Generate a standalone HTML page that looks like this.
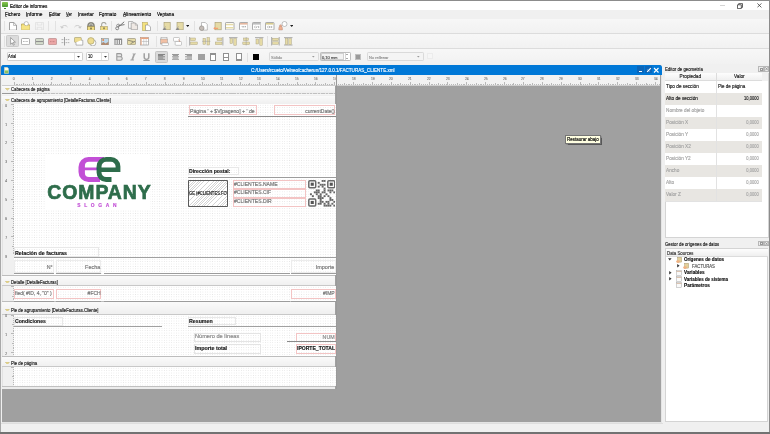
<!DOCTYPE html><html><head><meta charset="utf-8"><style>
html,body{margin:0;padding:0;}
body{width:770px;height:434px;position:relative;overflow:hidden;background:#f0f0f0;font-family:"Liberation Sans",sans-serif;}
div{box-sizing:border-box;}
.t{position:absolute;white-space:nowrap;line-height:1.2;}
</style></head><body>
<div style="position:absolute;left:0px;top:0px;width:770px;height:434px;background:#f0f0f0;"></div>
<div style="position:absolute;left:0px;top:0px;width:770px;height:10px;background:#fff;"></div>
<div style="position:absolute;left:0px;top:0px;width:770px;height:1px;background:#8c8c8c;"></div>
<div style="position:absolute;left:0px;top:0px;width:1.3px;height:434px;background:#a8a8a8;"></div>
<div style="position:absolute;left:769px;top:0px;width:1px;height:434px;background:#8c8c8c;"></div>
<div style="position:absolute;left:0px;top:432.2px;width:770px;height:1.8px;background:#727272;"></div>
<div style="position:absolute;left:2.2px;top:2.2px;width:5.5px;height:5.3px;background:linear-gradient(#8cc850,#4a9a30);border-radius:0.8px;"></div>
<div style="position:absolute;left:3.5px;top:7.5px;width:2px;height:0.8px;background:#4a8a30;"></div>
<div class="t" style="left:10.2px;top:3px;font-size:12.0px;color:#000;font-weight:normal;transform:scale(0.3841,0.4250) translateZ(0);transform-origin:0 0;-webkit-text-stroke:0.38px #000;">Editor de informes</div>
<div style="position:absolute;left:720px;top:4.8px;width:4.6px;height:0.8px;background:#d4d4d4;"></div>
<svg style="position:absolute;left:737px;top:3px" width="6" height="6"><path d="M0.5 1.8h3.8v3.8h-3.8z M1.7 1.8v-1.2h3.8v3.8h-1.2" fill="none" stroke="#222" stroke-width="0.7"/></svg>
<svg style="position:absolute;left:756.8px;top:3px" width="5" height="5"><path d="M0.4 0.4L4.4 4.4M4.4 0.4L0.4 4.4" stroke="#333" stroke-width="0.75"/></svg>
<div style="position:absolute;left:1px;top:10px;width:768px;height:8.5px;background:#f0f0f0;"></div>
<div class="t" style="left:4.9px;top:11px;font-size:12.0px;color:#000;font-weight:normal;transform:scale(0.3824,0.4250) translateZ(0);transform-origin:0 0;-webkit-text-stroke:0.38px #000;">Fichero</div>
<div style="position:absolute;left:5.1000000000000005px;top:16.0px;width:2.4px;height:0.5px;background:#888;"></div>
<div class="t" style="left:26.2px;top:11px;font-size:12.0px;color:#000;font-weight:normal;transform:scale(0.4056,0.4250) translateZ(0);transform-origin:0 0;-webkit-text-stroke:0.38px #000;">Informe</div>
<div style="position:absolute;left:26.4px;top:16.0px;width:1.2px;height:0.5px;background:#888;"></div>
<div class="t" style="left:48.800000000000004px;top:11px;font-size:12.0px;color:#000;font-weight:normal;transform:scale(0.3700,0.4250) translateZ(0);transform-origin:0 0;-webkit-text-stroke:0.38px #000;">Editar</div>
<div style="position:absolute;left:49.0px;top:16.0px;width:2.4px;height:0.5px;background:#888;"></div>
<div class="t" style="left:66.2px;top:11px;font-size:12.0px;color:#000;font-weight:normal;transform:scale(0.3276,0.4250) translateZ(0);transform-origin:0 0;-webkit-text-stroke:0.38px #000;">Ver</div>
<div style="position:absolute;left:66.4px;top:16.0px;width:2.8px;height:0.5px;background:#888;"></div>
<div class="t" style="left:78.0px;top:11px;font-size:12.0px;color:#000;font-weight:normal;transform:scale(0.3859,0.4250) translateZ(0);transform-origin:0 0;-webkit-text-stroke:0.38px #000;">Insertar</div>
<div style="position:absolute;left:78.2px;top:16.0px;width:1.2px;height:0.5px;background:#888;"></div>
<div class="t" style="left:99.2px;top:11px;font-size:12.0px;color:#000;font-weight:normal;transform:scale(0.3872,0.4250) translateZ(0);transform-origin:0 0;-webkit-text-stroke:0.38px #000;">Formato</div>
<div style="position:absolute;left:102.0px;top:16.0px;width:2.4px;height:0.5px;background:#888;"></div>
<div class="t" style="left:122.9px;top:11px;font-size:12.0px;color:#000;font-weight:normal;transform:scale(0.4065,0.4250) translateZ(0);transform-origin:0 0;-webkit-text-stroke:0.38px #000;">Alineamiento</div>
<div style="position:absolute;left:123.10000000000001px;top:16.0px;width:2.8px;height:0.5px;background:#888;"></div>
<div class="t" style="left:156.7px;top:11px;font-size:12.0px;color:#000;font-weight:normal;transform:scale(0.3860,0.4250) translateZ(0);transform-origin:0 0;-webkit-text-stroke:0.38px #000;">Ventana</div>
<div style="position:absolute;left:162.0px;top:16.0px;width:2.4px;height:0.5px;background:#888;"></div>
<div style="position:absolute;left:1px;top:18.5px;width:768px;height:15.0px;background:linear-gradient(#f7f7f7,#f1f1f1);"></div>
<div style="position:absolute;left:1px;top:32.7px;width:768px;height:0.8px;background:#dcdcdc;"></div>
<div style="position:absolute;left:1px;top:33.5px;width:768px;height:15.700000000000003px;background:linear-gradient(#f7f7f7,#f1f1f1);"></div>
<div style="position:absolute;left:1px;top:48.400000000000006px;width:768px;height:0.8px;background:#dcdcdc;"></div>
<div style="position:absolute;left:1px;top:49.2px;width:768px;height:15.399999999999991px;background:linear-gradient(#f7f7f7,#f1f1f1);"></div>
<div style="position:absolute;left:1px;top:63.8px;width:768px;height:0.8px;background:#dcdcdc;"></div>
<div style="position:absolute;left:3.6px;top:21px;width:0.8px;height:10px;background:#e2e2e2;"></div>
<svg style="position:absolute;left:9px;top:21.8px;" width="8" height="8.5" viewBox="0 0 8 8.5"><path d="M0.5 0.5h4.3l2.7 2.7v5h-7z" fill="#fff" stroke="#8a8a8a" stroke-width="0.8"/><path d="M4.6 0.5v2.9h2.9" fill="none" stroke="#8a8a8a" stroke-width="0.6"/></svg>
<svg style="position:absolute;left:21.3px;top:21.2px;" width="9" height="9" viewBox="0 0 9 9"><path d="M0.5 3h3l0.8 0.8h4.2v4.8h-8z" fill="#f4e07a" stroke="#b4a050" stroke-width="0.7"/><circle cx="5.3" cy="2.7" r="2.1" fill="#fff" stroke="#999" stroke-width="0.6"/><path d="M0.5 4.8h8v3.8h-8z" fill="#f6e485"/></svg>
<svg style="position:absolute;left:34.5px;top:21.8px;opacity:0.16;" width="9" height="8.5" viewBox="0 0 9 8.5"><path d="M0.5 0.5h8v7.5h-8z M2.2 0.5v2.5h4.6v-2.5 M2.2 8v-2.7h4.6v2.7" fill="none" stroke="#777" stroke-width="0.8"/></svg>
<div style="position:absolute;left:48px;top:21px;width:0.8px;height:10px;background:#e2e2e2;"></div>
<div style="position:absolute;left:54.5px;top:21px;width:0.8px;height:10px;background:#e2e2e2;"></div>
<svg style="position:absolute;left:60px;top:23px;opacity:0.25;" width="9" height="6" viewBox="0 0 9 6"><path d="M1.5 4.5a3.2 2.6 0 0 1 6 -0.5" fill="none" stroke="#555" stroke-width="1"/><path d="M0 3l1.8 2.8 2-1.6z" fill="#555"/></svg>
<svg style="position:absolute;left:73px;top:23px;opacity:0.25;" width="9" height="6" viewBox="0 0 9 6"><path d="M7.5 4.5a3.2 2.6 0 0 0 -6 -0.5" fill="none" stroke="#555" stroke-width="1"/><path d="M9 3l-1.8 2.8-2-1.6z" fill="#555"/></svg>
<svg style="position:absolute;left:86.8px;top:21.8px;" width="8" height="8.5" viewBox="0 0 8 8.5"><path d="M0.5 8V3.8a3.5 3.5 0 0 1 7 0V8z" fill="#8a8a80" stroke="#7a7a70" stroke-width="0.5"/><path d="M2.2 3.6a1.8 1.8 0 0 1 3.6 0" fill="none" stroke="#d8d8d0" stroke-width="0.8"/><rect x="0.6" y="4.6" width="6.8" height="3.6" fill="#f0dc80" stroke="#9a8a50" stroke-width="0.5"/><rect x="3.5" y="5.6" width="1" height="1.8" fill="#333"/></svg>
<svg style="position:absolute;left:100px;top:21.8px;" width="8" height="8.5" viewBox="0 0 8 8.5"><path d="M1.6 4.5V2.6a2.2 2.2 0 0 1 4.4 0" fill="none" stroke="#a8a8a0" stroke-width="1.1"/><rect x="0.6" y="4.4" width="6.8" height="3.8" fill="#f0dc80" stroke="#a09060" stroke-width="0.5"/><rect x="3.5" y="5.4" width="1" height="1.8" fill="#444"/></svg>
<div style="position:absolute;left:111px;top:21px;width:0.8px;height:10px;background:#e2e2e2;"></div>
<svg style="position:absolute;left:114.5px;top:21.2px;" width="10" height="9.5" viewBox="0 0 10 9.5"><path d="M3.2 6.2L9.2 0.8M3.8 4.6L9.5 3.6" stroke="#6a6a6a" stroke-width="0.9"/><path d="M5.5 4.8L3.5 2.5" stroke="#888" stroke-width="0.6"/><circle cx="2.2" cy="7.3" r="1.5" fill="none" stroke="#707070" stroke-width="0.8"/><circle cx="2.8" cy="4.6" r="1.2" fill="none" stroke="#777" stroke-width="0.7"/></svg>
<svg style="position:absolute;left:128.3px;top:21.3px;" width="10" height="9.2" viewBox="0 0 10 9.2"><path d="M0.5 0.5h4.2l1.8 1.8v5h-6z" fill="#f6f6f6" stroke="#9a9a9a" stroke-width="0.7"/><path d="M3.2 2h4.3l2 2v4.7h-6.3z" fill="#efe9e4" stroke="#9a9a9a" stroke-width="0.7"/><path d="M7.3 2v2.2h2.2" fill="none" stroke="#9a9a9a" stroke-width="0.5"/></svg>
<svg style="position:absolute;left:141.7px;top:21.5px;" width="9" height="9" viewBox="0 0 9 9"><rect x="0.5" y="0.5" width="5" height="8" fill="#f4e27e" stroke="#b8a860" stroke-width="0.6"/><path d="M3.5 3h3l2 2v3.5h-5z" fill="#fff" stroke="#888" stroke-width="0.6"/></svg>
<div style="position:absolute;left:157px;top:21px;width:0.8px;height:10px;background:#e2e2e2;"></div>
<svg style="position:absolute;left:161.5px;top:21.6px;" width="9" height="8.6" viewBox="0 0 9 8.6"><rect x="2" y="0.4" width="6.2" height="7.4" fill="#e6dba6" stroke="#a49a70" stroke-width="0.6"/><path d="M0.5 8l2-2.3 2 1.2-1.6 1.6z" fill="#888"/><path d="M1.5 6.5l2.5-2" stroke="#999" stroke-width="0.6"/></svg>
<svg style="position:absolute;left:174.5px;top:21.6px;" width="9" height="8.6" viewBox="0 0 9 8.6"><rect x="2" y="0.4" width="6.2" height="7.4" fill="#e6dba6" stroke="#a49a70" stroke-width="0.6"/><path d="M0.5 8l2-2.3 2 1.2-1.6 1.6z" fill="#888"/><path d="M1.5 6.5l2.5-2" stroke="#999" stroke-width="0.6"/></svg>
<svg style="position:absolute;left:185.8px;top:25.2px;" width="3.6" height="2.2" viewBox="0 0 3.6 2.2"><path d="M0 0h3.4L1.7 2z" fill="#222"/></svg>
<div style="position:absolute;left:194px;top:21px;width:0.8px;height:10px;background:#e2e2e2;"></div>
<svg style="position:absolute;left:198.6px;top:21.6px;" width="9" height="9" viewBox="0 0 9 9"><path d="M2.5 0.5h3.8l2 2v5.6h-5.8z" fill="#fff" stroke="#999" stroke-width="0.6"/><circle cx="2.7" cy="6.2" r="2.3" fill="#c4bcb6" stroke="#8a8580" stroke-width="0.6"/></svg>
<svg style="position:absolute;left:212.5px;top:21.6px;" width="9" height="9" viewBox="0 0 9 9"><rect x="2" y="0.4" width="6.2" height="7.4" fill="#e6dba6" stroke="#a49a70" stroke-width="0.6"/><path d="M0.3 6.3l1.8-1.6v1h3v1.3h-3v1z" fill="#f4a070"/></svg>
<svg style="position:absolute;left:225.3px;top:21.8px;" width="9.5" height="8.5" viewBox="0 0 9.5 8.5"><rect x="0.5" y="0.5" width="8.5" height="7.5" rx="0.8" fill="#fff" stroke="#8a8a8a" stroke-width="0.7"/><rect x="1" y="1.8" width="7.5" height="1.5" fill="#e6dba6"/><rect x="1" y="5" width="7.5" height="1.5" fill="#e6dba6"/></svg>
<svg style="position:absolute;left:238.6px;top:21.8px;" width="9.5" height="8.5" viewBox="0 0 9.5 8.5"><rect x="0.5" y="0.5" width="8.5" height="7.5" rx="0.8" fill="#fff" stroke="#8a8a8a" stroke-width="0.7"/><rect x="1" y="1" width="7.5" height="1.6" fill="#e6b8a0"/><path d="M2.5 4.8l1 -0.8v1.6zM7 4.8l-1 -0.8v1.6z" fill="#777"/><rect x="4.2" y="4.3" width="1.2" height="1" fill="#888"/></svg>
<svg style="position:absolute;left:251.6px;top:21.8px;" width="9.5" height="8.5" viewBox="0 0 9.5 8.5"><rect x="0.5" y="0.5" width="8.5" height="7.5" rx="0.8" fill="#fff" stroke="#8a8a8a" stroke-width="0.7"/><rect x="1" y="1" width="7.5" height="1.6" fill="#bdbdbd"/><path d="M2.3 5l1.2-0.9M2.3 5l1.2 0.9M7.2 5L6 4.1M7.2 5L6 5.9M4.2 6l1-2" stroke="#777" stroke-width="0.5"/></svg>
<svg style="position:absolute;left:265px;top:21.8px;" width="9.5" height="8.5" viewBox="0 0 9.5 8.5"><rect x="0.5" y="0.5" width="8.5" height="7.5" rx="0.8" fill="#fff" stroke="#8a8a8a" stroke-width="0.7"/><rect x="1" y="1" width="7.5" height="1.6" fill="#d8cc90"/><path d="M2.3 5l1.2-0.9M2.3 5l1.2 0.9M7.2 5L6 4.1M7.2 5L6 5.9" stroke="#777" stroke-width="0.5"/><circle cx="4.75" cy="5" r="0.7" fill="#777"/></svg>
<svg style="position:absolute;left:278px;top:21.2px;" width="9.5" height="9.5" viewBox="0 0 9.5 9.5"><circle cx="6.5" cy="3" r="2.5" fill="#fff" stroke="#999" stroke-width="0.6"/><circle cx="2.6" cy="4.8" r="1.1" fill="#f0b090" stroke="#b08070" stroke-width="0.4"/><path d="M0.8 9v-2a1.8 1.8 0 0 1 3.6 0v2z" fill="#f0b090" stroke="#b08070" stroke-width="0.4"/></svg>
<svg style="position:absolute;left:289.8px;top:25.2px;" width="3.6" height="2.2" viewBox="0 0 3.6 2.2"><path d="M0 0h3.4L1.7 2z" fill="#222"/></svg>
<div style="position:absolute;left:3.6px;top:36px;width:0.8px;height:11px;background:#e2e2e2;"></div>
<div style="position:absolute;left:6.2px;top:35.2px;width:12.7px;height:12px;background:#dcdcdc;border:0.7px solid #cbcbcb;border-radius:1.3px;"></div>
<svg style="position:absolute;left:9.6px;top:36.8px;" width="6" height="9" viewBox="0 0 6 9"><path d="M0.6 0.6L5.4 5.2H3.2L4.3 7.8 3.3 8.2 2.2 5.8 0.6 7.3z" fill="#fff" stroke="#777" stroke-width="0.6"/></svg>
<svg style="position:absolute;left:21.3px;top:37.8px;" width="9" height="7.2" viewBox="0 0 9 7.2"><rect x="0.5" y="0.5" width="8" height="6.2" rx="1" fill="#fff" stroke="#8a8a8a" stroke-width="0.7"/><path d="M2 3.5h5" stroke="#999" stroke-width="0.7" stroke-dasharray="1 0.4"/></svg>
<svg style="position:absolute;left:34.8px;top:37.8px;" width="9" height="7.2" viewBox="0 0 9 7.2"><rect x="0.5" y="0.5" width="8" height="6.2" rx="0.8" fill="#d4dccc" stroke="#8a8a8a" stroke-width="0.7"/><rect x="1" y="3" width="7" height="1.1" fill="#909090"/></svg>
<svg style="position:absolute;left:47.8px;top:37.8px;" width="9" height="7.2" viewBox="0 0 9 7.2"><rect x="0.5" y="0.5" width="8" height="6.2" rx="0.8" fill="#eba6a6" stroke="#b08080" stroke-width="0.6"/><path d="M2 3.6h5" stroke="#b07070" stroke-width="0.6" stroke-dasharray="1 0.5"/></svg>
<svg style="position:absolute;left:61px;top:37.2px;" width="9" height="8.5" viewBox="0 0 9 8.5"><path d="M3.5 0v8.5" stroke="#8a8a8a" stroke-width="0.8"/><path d="M0.5 2.6h8M0.5 5.6h8" stroke="#999" stroke-width="0.7" stroke-dasharray="1.5 0.6"/></svg>
<svg style="position:absolute;left:74px;top:37px;" width="9.5" height="9" viewBox="0 0 9.5 9"><rect x="0.5" y="0.5" width="6.8" height="4.8" rx="0.6" fill="#eedc90" stroke="#a09868" stroke-width="0.6"/><path d="M2 5.3v2.8h6.8v-4.8h-1.5" fill="#fff" stroke="#888" stroke-width="0.6"/></svg>
<svg style="position:absolute;left:87.2px;top:36.8px;" width="9.5" height="9.5" viewBox="0 0 9.5 9.5"><circle cx="5.8" cy="5.8" r="3.1" fill="#fff" stroke="#888" stroke-width="0.6"/><circle cx="3.9" cy="3.9" r="3.3" fill="#eedc90" stroke="#a09868" stroke-width="0.6"/></svg>
<svg style="position:absolute;left:100.5px;top:37.6px;" width="8" height="7.5" viewBox="0 0 8 7.5"><rect x="0.4" y="0.4" width="7.2" height="6.5" fill="#bcd8ec" stroke="#8a8070" stroke-width="0.5"/><circle cx="2.2" cy="2" r="0.9" fill="#f08040"/><path d="M0.5 7V5.3l2-1.2 2 1.5 3-1.8V7z" fill="#b08a70"/></svg>
<svg style="position:absolute;left:114px;top:37.6px;" width="8.5" height="7.5" viewBox="0 0 8.5 7.5"><rect x="0.5" y="0.5" width="7.5" height="1.5" fill="#8a8a8a"/><path d="M1 1v6M3.2 1v5.5M5.4 1v5.5M7.6 1v6" stroke="#8a8a8a" stroke-width="1.1"/><rect x="1" y="6" width="6.5" height="1" fill="#aaa"/></svg>
<svg style="position:absolute;left:127.2px;top:37.8px;" width="9" height="7.2" viewBox="0 0 9 7.2"><rect x="0.5" y="0.5" width="8" height="6.2" rx="0.8" fill="#e6dba6" stroke="#8a8570" stroke-width="0.6"/><path d="M1 2.2l5.5 1.5M3.5 5.8l4.5-2.5" stroke="#555" stroke-width="0.6"/></svg>
<svg style="position:absolute;left:140.3px;top:37.2px;" width="9" height="8.5" viewBox="0 0 9 8.5"><rect x="0.5" y="0.5" width="8" height="7.5" fill="#fff" stroke="#8a8a8a" stroke-width="0.6"/><rect x="0.5" y="0.5" width="8" height="1.5" fill="#eba37e"/><rect x="0.5" y="0.5" width="1.2" height="7.5" fill="#e8b090"/><path d="M3.8 2v6M6.2 2v6M1.7 4.5h6.8" stroke="#a0a0a0" stroke-width="0.45"/></svg>
<div style="position:absolute;left:156px;top:36px;width:0.8px;height:11px;background:#e2e2e2;"></div>
<svg style="position:absolute;left:159.8px;top:37px;" width="9" height="9" viewBox="0 0 9 9"><rect x="1" y="0.5" width="6" height="2.5" fill="#fff" stroke="#999" stroke-width="0.5"/><rect x="0.5" y="2" width="7" height="5" fill="#f2c0a4" stroke="#999" stroke-width="0.5"/><rect x="2" y="6" width="6.5" height="2.5" fill="#fff" stroke="#999" stroke-width="0.5"/></svg>
<svg style="position:absolute;left:173.2px;top:37px;" width="9" height="9" viewBox="0 0 9 9"><rect x="0.5" y="0.5" width="6" height="3.8" rx="0.8" fill="#fff" stroke="#999" stroke-width="0.5"/><rect x="2.2" y="4.5" width="6.3" height="3.8" rx="0.8" fill="#fff" stroke="#999" stroke-width="0.5"/><path d="M5.5 2.5l1.5 2.5" stroke="#d08060" stroke-width="0.6"/></svg>
<div style="position:absolute;left:185.5px;top:36px;width:0.8px;height:11px;background:#e2e2e2;"></div>
<svg style="position:absolute;left:189.2px;top:37.2px;" width="8.8" height="8.6" viewBox="0 0 8.8 8.6"><path d="M0.6 0v8.5" stroke="#999" stroke-width="0.8"/><rect x="1.5" y="1" width="5" height="2.6" fill="#e6dba6" stroke="#a8a080" stroke-width="0.45"/><rect x="1.5" y="5" width="6.8" height="2.6" fill="#e6dba6" stroke="#a8a080" stroke-width="0.45"/></svg>
<svg style="position:absolute;left:202.2px;top:37.2px;" width="8.8" height="8.6" viewBox="0 0 8.8 8.6"><rect x="1" y="1.3" width="2.6" height="6" fill="#e6dba6" stroke="#a8a080" stroke-width="0.45"/><rect x="5" y="0.6" width="2.6" height="7.4" fill="#e6dba6" stroke="#a8a080" stroke-width="0.45"/><path d="M0 4.3h8.5" stroke="#999" stroke-width="0.5"/></svg>
<svg style="position:absolute;left:215.4px;top:37.2px;" width="8.8" height="8.6" viewBox="0 0 8.8 8.6"><path d="M7.9 0v8.5" stroke="#999" stroke-width="0.8"/><rect x="2" y="1" width="5" height="2.6" fill="#e6dba6" stroke="#a8a080" stroke-width="0.45"/><rect x="0.3" y="5" width="6.7" height="2.6" fill="#e6dba6" stroke="#a8a080" stroke-width="0.45"/></svg>
<svg style="position:absolute;left:228.8px;top:37.2px;" width="8.8" height="8.6" viewBox="0 0 8.8 8.6"><path d="M0 0.6h8.5" stroke="#999" stroke-width="0.8"/><rect x="1" y="1.5" width="2.6" height="5" fill="#e6dba6" stroke="#a8a080" stroke-width="0.45"/><rect x="4.8" y="1.5" width="2.6" height="6.8" fill="#e6dba6" stroke="#a8a080" stroke-width="0.45"/></svg>
<svg style="position:absolute;left:242px;top:37.2px;" width="8.8" height="8.6" viewBox="0 0 8.8 8.6"><rect x="1.5" y="1" width="5" height="2.6" fill="#e6dba6" stroke="#a8a080" stroke-width="0.45"/><rect x="0.8" y="5" width="6.8" height="2.6" fill="#e6dba6" stroke="#a8a080" stroke-width="0.45"/><path d="M4.2 0v8.5" stroke="#999" stroke-width="0.5"/></svg>
<svg style="position:absolute;left:255.2px;top:37.2px;" width="8.8" height="8.6" viewBox="0 0 8.8 8.6"><path d="M0 0.6h8.5" stroke="#999" stroke-width="0.8"/><rect x="1" y="2" width="2.6" height="5" fill="#e6dba6" stroke="#a8a080" stroke-width="0.45"/><rect x="4.8" y="1.5" width="2.6" height="6.8" fill="#e6dba6" stroke="#a8a080" stroke-width="0.45"/></svg>
<div style="position:absolute;left:267.3px;top:36px;width:0.8px;height:11px;background:#e2e2e2;"></div>
<svg style="position:absolute;left:271px;top:37.2px;" width="8.8" height="8.6" viewBox="0 0 8.8 8.6"><path d="M0.6 0v8.5M8.2 0v8.5" stroke="#999" stroke-width="0.8"/><rect x="1.5" y="1.2" width="6" height="2.5" fill="#e6dba6" stroke="#a8a080" stroke-width="0.45"/><rect x="1.5" y="4.8" width="6" height="2.5" fill="#e6dba6" stroke="#a8a080" stroke-width="0.45"/></svg>
<svg style="position:absolute;left:284px;top:37.2px;" width="8.8" height="8.6" viewBox="0 0 8.8 8.6"><path d="M0 0.6h8.5M0 8h8.5" stroke="#999" stroke-width="0.8"/><rect x="1.2" y="1.5" width="2.6" height="6" fill="#e6dba6" stroke="#a8a080" stroke-width="0.45"/><rect x="4.8" y="1.5" width="2.6" height="6" fill="#e6dba6" stroke="#a8a080" stroke-width="0.45"/></svg>
<div style="position:absolute;left:6.5px;top:52.3px;width:76px;height:9px;background:#fff;border:0.8px solid #cfcfcf;border-radius:1.2px;"></div>
<div class="t" style="left:7.8px;top:55px;font-size:12.0px;color:#111;font-weight:normal;transform:scale(0.3333,0.3333) translateZ(0);transform-origin:0 0;-webkit-text-stroke:0.38px #111;"></div>
<div style="position:absolute;left:74.3px;top:53.099999999999994px;width:0.7px;height:7.4px;background:#e2e2e2;"></div>
<svg style="position:absolute;left:76.9px;top:55.9px;" width="3" height="2" viewBox="0 0 3 2"><path d="M0 0h3L1.5 1.8z" fill="#333"/></svg>
<div class="t" style="left:7.9px;top:54px;font-size:12.0px;color:#111;font-weight:normal;transform:scale(0.3332,0.4000) translateZ(0);transform-origin:0 0;-webkit-text-stroke:0.38px #111;">Arial</div>
<div style="position:absolute;left:86px;top:52.3px;width:23.4px;height:9px;background:#fff;border:0.8px solid #cfcfcf;border-radius:1.2px;"></div>
<div class="t" style="left:87.3px;top:55px;font-size:12.0px;color:#111;font-weight:normal;transform:scale(0.3333,0.3333) translateZ(0);transform-origin:0 0;-webkit-text-stroke:0.38px #111;"></div>
<div style="position:absolute;left:101.2px;top:53.099999999999994px;width:0.7px;height:7.4px;background:#e2e2e2;"></div>
<svg style="position:absolute;left:103.80000000000001px;top:55.9px;" width="3" height="2" viewBox="0 0 3 2"><path d="M0 0h3L1.5 1.8z" fill="#333"/></svg>
<div class="t" style="left:87.5px;top:54px;font-size:12.0px;color:#111;font-weight:normal;transform:scale(0.3446,0.4000) translateZ(0);transform-origin:0 0;-webkit-text-stroke:0.38px #111;">10</div>
<svg style="position:absolute;left:115.5px;top:53.2px;" width="8" height="7.8" viewBox="0 0 8 7.8"><path d="M0.8 0.6h3.3a1.65 1.6 0 0 1 0 3.2h-3.3z M0.8 3.8h3.7a1.75 1.7 0 0 1 0 3.4h-3.7z" fill="#e6e6e6" stroke="#9a9a9a" stroke-width="1.1" stroke-linejoin="round"/></svg>
<svg style="position:absolute;left:129.5px;top:53.2px;" width="6.5" height="7.8" viewBox="0 0 6.5 7.8"><path d="M2.6 0.4h3.6l-0.2 0.9h-0.9l-1.9 5.2h0.9l-0.2 0.9h-3.6l0.2-0.9h0.9l1.9-5.2h-0.9z" fill="#a4a4a4"/></svg>
<svg style="position:absolute;left:142.5px;top:53px;" width="7" height="8.2" viewBox="0 0 7 8.2"><path d="M1.2 0.3v3.8a2.3 2.3 0 0 0 4.6 0v-3.8" fill="none" stroke="#a0a0a0" stroke-width="1.5"/><rect x="0.3" y="7" width="6.4" height="1" fill="#a0a0a0"/></svg>
<div style="position:absolute;left:155px;top:51.2px;width:13px;height:11.5px;background:#dadada;border:0.8px solid #c4c4c4;border-radius:1.5px;"></div>
<svg style="position:absolute;left:158.3px;top:54.0px;" width="7" height="6" viewBox="0 0 7 6"><rect x="0" y="0.00" width="7" height="0.85" fill="#777"/><rect x="0" y="1.20" width="5.2" height="0.85" fill="#777"/><rect x="0" y="2.40" width="7" height="0.85" fill="#777"/><rect x="0" y="3.60" width="5.2" height="0.85" fill="#777"/><rect x="0" y="4.80" width="7" height="0.85" fill="#777"/></svg>
<svg style="position:absolute;left:171.5px;top:54.0px;" width="7" height="6" viewBox="0 0 7 6"><rect x="0.0" y="0.00" width="7" height="0.85" fill="#888"/><rect x="0.8999999999999999" y="1.20" width="5.2" height="0.85" fill="#888"/><rect x="0.0" y="2.40" width="7" height="0.85" fill="#888"/><rect x="0.8999999999999999" y="3.60" width="5.2" height="0.85" fill="#888"/><rect x="0.0" y="4.80" width="7" height="0.85" fill="#888"/></svg>
<svg style="position:absolute;left:184.5px;top:54.0px;" width="7" height="6" viewBox="0 0 7 6"><rect x="0" y="0.00" width="7" height="0.85" fill="#888"/><rect x="1.7999999999999998" y="1.20" width="5.2" height="0.85" fill="#888"/><rect x="0" y="2.40" width="7" height="0.85" fill="#888"/><rect x="1.7999999999999998" y="3.60" width="5.2" height="0.85" fill="#888"/><rect x="0" y="4.80" width="7" height="0.85" fill="#888"/></svg>
<div style="position:absolute;left:197.5px;top:54px;width:7px;height:5.5px;background:#a0a0a0;"></div>
<div style="position:absolute;left:210px;top:53.3px;width:6.2px;height:8px;background:#fff;border:0.8px solid #909090;"></div>
<div style="position:absolute;left:223px;top:53.3px;width:6.2px;height:8px;background:#fff;border:0.8px solid #909090;"></div>
<div style="position:absolute;left:236px;top:53.3px;width:6.2px;height:8px;background:#fff;border:0.8px solid #909090;"></div>
<div style="position:absolute;left:211px;top:54.2px;width:4.2px;height:1px;background:#909090;"></div>
<div style="position:absolute;left:224px;top:56.8px;width:4.2px;height:1px;background:#909090;"></div>
<div style="position:absolute;left:237px;top:59.4px;width:4.2px;height:1px;background:#909090;"></div>
<div style="position:absolute;left:247px;top:52.5px;width:0.7px;height:9px;background:#e0e0e0;"></div>
<div style="position:absolute;left:253px;top:54px;width:5.8px;height:5.8px;background:#000;"></div>
<div style="position:absolute;left:269px;top:52.3px;width:49.5px;height:9px;background:#f4f4f4;border:0.8px solid #dadada;border-radius:1.2px;"></div>
<div class="t" style="left:270.8px;top:55px;font-size:12.0px;color:#8a8a8a;font-weight:normal;transform:scale(0.3333,0.3333) translateZ(0);transform-origin:0 0;-webkit-text-stroke:0.38px #8a8a8a;">Sólido</div>
<svg style="position:absolute;left:312.3px;top:56.099999999999994px;" width="2.6" height="1.8" viewBox="0 0 2.6 1.8"><path d="M0 0h2.6L1.3 1.6z" fill="#999"/></svg>
<div style="position:absolute;left:320px;top:52.3px;width:30.5px;height:9px;background:#fff;border:0.8px solid #bdbdbd;border-radius:1.2px;"></div>
<div style="position:absolute;left:320.8px;top:53.2px;width:23.5px;height:7.3px;background:#f2f2f2;border:0.6px solid #d0d0d0;"></div>
<div class="t" style="left:322.3px;top:55px;font-size:12.0px;color:#444;font-weight:normal;transform:scale(0.3333,0.3333) translateZ(0);transform-origin:0 0;-webkit-text-stroke:0.38px #444;">0,10 mm</div>
<div style="position:absolute;left:344.8px;top:53.2px;width:0.6px;height:7.3px;background:#d6d6d6;"></div>
<div style="position:absolute;left:346.3px;top:54.3px;width:0;height:0;border-left:1.2px solid transparent;border-right:1.2px solid transparent;border-bottom:1.5px solid #555;"></div>
<div style="position:absolute;left:346.3px;top:58.3px;width:0;height:0;border-left:1.2px solid transparent;border-right:1.2px solid transparent;border-top:1.5px solid #555;"></div>
<div style="position:absolute;left:355px;top:54px;width:6px;height:6px;background:#9a9a9a;border:0.7px solid #c0c0c0;"></div>
<div style="position:absolute;left:367px;top:52.3px;width:56.5px;height:9px;background:#f4f4f4;border:0.8px solid #dadada;border-radius:1.2px;"></div>
<div class="t" style="left:368.8px;top:55px;font-size:12.0px;color:#8a8a8a;font-weight:normal;transform:scale(0.3333,0.3333) translateZ(0);transform-origin:0 0;-webkit-text-stroke:0.38px #8a8a8a;">No rellenar</div>
<svg style="position:absolute;left:417.3px;top:56.099999999999994px;" width="2.6" height="1.8" viewBox="0 0 2.6 1.8"><path d="M0 0h2.6L1.3 1.6z" fill="#999"/></svg>
<div style="position:absolute;left:426.5px;top:53px;width:6.4px;height:6.4px;background:#f6f6f6;border:0.5px solid #ececec;"></div>
<div style="position:absolute;left:1px;top:64px;width:662px;height:359px;background:#f0f0f0;"></div>
<div style="position:absolute;left:1.9px;top:64.6px;width:760px;height:358px;background:#a0a0a0;"></div>
<div style="position:absolute;left:660.5px;top:64.6px;width:1.5px;height:358px;background:#e4e4e4;"></div>
<div style="position:absolute;left:1.9px;top:421.6px;width:660px;height:1.4px;background:#e4e4e4;"></div>
<div style="position:absolute;left:1.4px;top:64.8px;width:660.6px;height:10.2px;background:#0078d7;border-radius:2.5px 2.5px 0 0;"></div>
<svg style="position:absolute;left:4.3px;top:66.6px" width="5" height="7"><path d="M0.3 0.3h3l1.3 1.3v4.8h-4.3z" fill="#fffbe0" stroke="#c8c8b0" stroke-width="0.4"/><rect x="0.7" y="3.4" width="3.6" height="2.8" fill="#8cc060"/></svg>
<div class="t" style="left:251.2px;top:68px;font-size:12.0px;color:#fff;font-weight:normal;transform:scale(0.3817,0.3817) translateZ(0);transform-origin:0 0;-webkit-text-stroke:0.38px #fff;">C:/Users/rcueto/Velneo/cacherun/127.0.0.1/FACTURAS_CLIENTE.xml</div>
<div style="position:absolute;left:636.8px;top:66.3px;width:7.2px;height:7.2px;background:#0b65b8;"></div>
<div style="position:absolute;left:638.8px;top:71.3px;width:3.5px;height:1px;background:#fff;"></div>
<div style="position:absolute;left:644.6px;top:66.3px;width:7.6px;height:7.2px;background:#0b65b8;"></div>
<svg style="position:absolute;left:645.5px;top:67px" width="6" height="6"><path d="M1.2 4.8L4.8 1.2" stroke="#fff" stroke-width="1.2"/><path d="M1.5 2.6l1.9 1.9" stroke="#fff" stroke-width="0.6"/></svg>
<svg style="position:absolute;left:653.2px;top:66.8px" width="6.5" height="6.5"><path d="M1 1L5.5 5.5M5.5 1L1 5.5" stroke="#fff" stroke-width="1.1"/></svg>
<div style="position:absolute;left:1.9px;top:75px;width:658.6px;height:10.7px;background:#f2f2f2;"></div>
<div style="position:absolute;left:1.9px;top:85.2px;width:658.6px;height:0.8px;background:#cdcdcd;"></div>
<div class="t" style="left:-41.733px;width:400.0px;text-align:center;top:77px;font-size:12.0px;color:#7a7a7a;font-weight:normal;transform:scale(0.2787,0.3167) translateZ(0);transform-origin:0 0;-webkit-text-stroke:0.38px #7a7a7a;">0</div>
<div style="position:absolute;left:13.70px;top:82.00px;width:0.6px;height:3.2px;background:#b8b8b8;"></div>
<div style="position:absolute;left:15.59px;top:83.70px;width:0.6px;height:1.5px;background:#b8b8b8;"></div>
<div style="position:absolute;left:17.47px;top:83.70px;width:0.6px;height:1.5px;background:#b8b8b8;"></div>
<div style="position:absolute;left:19.36px;top:83.70px;width:0.6px;height:1.5px;background:#b8b8b8;"></div>
<div style="position:absolute;left:21.24px;top:83.70px;width:0.6px;height:1.5px;background:#b8b8b8;"></div>
<div style="position:absolute;left:23.13px;top:83.00px;width:0.6px;height:2.2px;background:#b8b8b8;"></div>
<div style="position:absolute;left:25.02px;top:83.70px;width:0.6px;height:1.5px;background:#b8b8b8;"></div>
<div style="position:absolute;left:26.90px;top:83.70px;width:0.6px;height:1.5px;background:#b8b8b8;"></div>
<div style="position:absolute;left:28.79px;top:83.70px;width:0.6px;height:1.5px;background:#b8b8b8;"></div>
<div style="position:absolute;left:30.67px;top:83.70px;width:0.6px;height:1.5px;background:#b8b8b8;"></div>
<div class="t" style="left:-22.873px;width:400.0px;text-align:center;top:77px;font-size:12.0px;color:#7a7a7a;font-weight:normal;transform:scale(0.2787,0.3167) translateZ(0);transform-origin:0 0;-webkit-text-stroke:0.38px #7a7a7a;">1</div>
<div style="position:absolute;left:32.56px;top:82.00px;width:0.6px;height:3.2px;background:#b8b8b8;"></div>
<div style="position:absolute;left:34.45px;top:83.70px;width:0.6px;height:1.5px;background:#b8b8b8;"></div>
<div style="position:absolute;left:36.33px;top:83.70px;width:0.6px;height:1.5px;background:#b8b8b8;"></div>
<div style="position:absolute;left:38.22px;top:83.70px;width:0.6px;height:1.5px;background:#b8b8b8;"></div>
<div style="position:absolute;left:40.10px;top:83.70px;width:0.6px;height:1.5px;background:#b8b8b8;"></div>
<div style="position:absolute;left:41.99px;top:83.00px;width:0.6px;height:2.2px;background:#b8b8b8;"></div>
<div style="position:absolute;left:43.88px;top:83.70px;width:0.6px;height:1.5px;background:#b8b8b8;"></div>
<div style="position:absolute;left:45.76px;top:83.70px;width:0.6px;height:1.5px;background:#b8b8b8;"></div>
<div style="position:absolute;left:47.65px;top:83.70px;width:0.6px;height:1.5px;background:#b8b8b8;"></div>
<div style="position:absolute;left:49.53px;top:83.70px;width:0.6px;height:1.5px;background:#b8b8b8;"></div>
<div class="t" style="left:-4.013px;width:400.0px;text-align:center;top:77px;font-size:12.0px;color:#7a7a7a;font-weight:normal;transform:scale(0.2787,0.3167) translateZ(0);transform-origin:0 0;-webkit-text-stroke:0.38px #7a7a7a;">2</div>
<div style="position:absolute;left:51.42px;top:82.00px;width:0.6px;height:3.2px;background:#b8b8b8;"></div>
<div style="position:absolute;left:53.31px;top:83.70px;width:0.6px;height:1.5px;background:#b8b8b8;"></div>
<div style="position:absolute;left:55.19px;top:83.70px;width:0.6px;height:1.5px;background:#b8b8b8;"></div>
<div style="position:absolute;left:57.08px;top:83.70px;width:0.6px;height:1.5px;background:#b8b8b8;"></div>
<div style="position:absolute;left:58.96px;top:83.70px;width:0.6px;height:1.5px;background:#b8b8b8;"></div>
<div style="position:absolute;left:60.85px;top:83.00px;width:0.6px;height:2.2px;background:#b8b8b8;"></div>
<div style="position:absolute;left:62.74px;top:83.70px;width:0.6px;height:1.5px;background:#b8b8b8;"></div>
<div style="position:absolute;left:64.62px;top:83.70px;width:0.6px;height:1.5px;background:#b8b8b8;"></div>
<div style="position:absolute;left:66.51px;top:83.70px;width:0.6px;height:1.5px;background:#b8b8b8;"></div>
<div style="position:absolute;left:68.39px;top:83.70px;width:0.6px;height:1.5px;background:#b8b8b8;"></div>
<div class="t" style="left:14.847px;width:400.0px;text-align:center;top:77px;font-size:12.0px;color:#7a7a7a;font-weight:normal;transform:scale(0.2787,0.3167) translateZ(0);transform-origin:0 0;-webkit-text-stroke:0.38px #7a7a7a;">3</div>
<div style="position:absolute;left:70.28px;top:82.00px;width:0.6px;height:3.2px;background:#b8b8b8;"></div>
<div style="position:absolute;left:72.17px;top:83.70px;width:0.6px;height:1.5px;background:#b8b8b8;"></div>
<div style="position:absolute;left:74.05px;top:83.70px;width:0.6px;height:1.5px;background:#b8b8b8;"></div>
<div style="position:absolute;left:75.94px;top:83.70px;width:0.6px;height:1.5px;background:#b8b8b8;"></div>
<div style="position:absolute;left:77.82px;top:83.70px;width:0.6px;height:1.5px;background:#b8b8b8;"></div>
<div style="position:absolute;left:79.71px;top:83.00px;width:0.6px;height:2.2px;background:#b8b8b8;"></div>
<div style="position:absolute;left:81.60px;top:83.70px;width:0.6px;height:1.5px;background:#b8b8b8;"></div>
<div style="position:absolute;left:83.48px;top:83.70px;width:0.6px;height:1.5px;background:#b8b8b8;"></div>
<div style="position:absolute;left:85.37px;top:83.70px;width:0.6px;height:1.5px;background:#b8b8b8;"></div>
<div style="position:absolute;left:87.25px;top:83.70px;width:0.6px;height:1.5px;background:#b8b8b8;"></div>
<div class="t" style="left:33.707px;width:400.0px;text-align:center;top:77px;font-size:12.0px;color:#7a7a7a;font-weight:normal;transform:scale(0.2787,0.3167) translateZ(0);transform-origin:0 0;-webkit-text-stroke:0.38px #7a7a7a;">4</div>
<div style="position:absolute;left:89.14px;top:82.00px;width:0.6px;height:3.2px;background:#b8b8b8;"></div>
<div style="position:absolute;left:91.03px;top:83.70px;width:0.6px;height:1.5px;background:#b8b8b8;"></div>
<div style="position:absolute;left:92.91px;top:83.70px;width:0.6px;height:1.5px;background:#b8b8b8;"></div>
<div style="position:absolute;left:94.80px;top:83.70px;width:0.6px;height:1.5px;background:#b8b8b8;"></div>
<div style="position:absolute;left:96.68px;top:83.70px;width:0.6px;height:1.5px;background:#b8b8b8;"></div>
<div style="position:absolute;left:98.57px;top:83.00px;width:0.6px;height:2.2px;background:#b8b8b8;"></div>
<div style="position:absolute;left:100.46px;top:83.70px;width:0.6px;height:1.5px;background:#b8b8b8;"></div>
<div style="position:absolute;left:102.34px;top:83.70px;width:0.6px;height:1.5px;background:#b8b8b8;"></div>
<div style="position:absolute;left:104.23px;top:83.70px;width:0.6px;height:1.5px;background:#b8b8b8;"></div>
<div style="position:absolute;left:106.11px;top:83.70px;width:0.6px;height:1.5px;background:#b8b8b8;"></div>
<div class="t" style="left:52.567px;width:400.0px;text-align:center;top:77px;font-size:12.0px;color:#7a7a7a;font-weight:normal;transform:scale(0.2787,0.3167) translateZ(0);transform-origin:0 0;-webkit-text-stroke:0.38px #7a7a7a;">5</div>
<div style="position:absolute;left:108.00px;top:82.00px;width:0.6px;height:3.2px;background:#b8b8b8;"></div>
<div style="position:absolute;left:109.89px;top:83.70px;width:0.6px;height:1.5px;background:#b8b8b8;"></div>
<div style="position:absolute;left:111.77px;top:83.70px;width:0.6px;height:1.5px;background:#b8b8b8;"></div>
<div style="position:absolute;left:113.66px;top:83.70px;width:0.6px;height:1.5px;background:#b8b8b8;"></div>
<div style="position:absolute;left:115.54px;top:83.70px;width:0.6px;height:1.5px;background:#b8b8b8;"></div>
<div style="position:absolute;left:117.43px;top:83.00px;width:0.6px;height:2.2px;background:#b8b8b8;"></div>
<div style="position:absolute;left:119.32px;top:83.70px;width:0.6px;height:1.5px;background:#b8b8b8;"></div>
<div style="position:absolute;left:121.20px;top:83.70px;width:0.6px;height:1.5px;background:#b8b8b8;"></div>
<div style="position:absolute;left:123.09px;top:83.70px;width:0.6px;height:1.5px;background:#b8b8b8;"></div>
<div style="position:absolute;left:124.97px;top:83.70px;width:0.6px;height:1.5px;background:#b8b8b8;"></div>
<div class="t" style="left:71.427px;width:400.0px;text-align:center;top:77px;font-size:12.0px;color:#7a7a7a;font-weight:normal;transform:scale(0.2787,0.3167) translateZ(0);transform-origin:0 0;-webkit-text-stroke:0.38px #7a7a7a;">6</div>
<div style="position:absolute;left:126.86px;top:82.00px;width:0.6px;height:3.2px;background:#b8b8b8;"></div>
<div style="position:absolute;left:128.75px;top:83.70px;width:0.6px;height:1.5px;background:#b8b8b8;"></div>
<div style="position:absolute;left:130.63px;top:83.70px;width:0.6px;height:1.5px;background:#b8b8b8;"></div>
<div style="position:absolute;left:132.52px;top:83.70px;width:0.6px;height:1.5px;background:#b8b8b8;"></div>
<div style="position:absolute;left:134.40px;top:83.70px;width:0.6px;height:1.5px;background:#b8b8b8;"></div>
<div style="position:absolute;left:136.29px;top:83.00px;width:0.6px;height:2.2px;background:#b8b8b8;"></div>
<div style="position:absolute;left:138.18px;top:83.70px;width:0.6px;height:1.5px;background:#b8b8b8;"></div>
<div style="position:absolute;left:140.06px;top:83.70px;width:0.6px;height:1.5px;background:#b8b8b8;"></div>
<div style="position:absolute;left:141.95px;top:83.70px;width:0.6px;height:1.5px;background:#b8b8b8;"></div>
<div style="position:absolute;left:143.83px;top:83.70px;width:0.6px;height:1.5px;background:#b8b8b8;"></div>
<div class="t" style="left:90.287px;width:400.0px;text-align:center;top:77px;font-size:12.0px;color:#7a7a7a;font-weight:normal;transform:scale(0.2787,0.3167) translateZ(0);transform-origin:0 0;-webkit-text-stroke:0.38px #7a7a7a;">7</div>
<div style="position:absolute;left:145.72px;top:82.00px;width:0.6px;height:3.2px;background:#b8b8b8;"></div>
<div style="position:absolute;left:147.61px;top:83.70px;width:0.6px;height:1.5px;background:#b8b8b8;"></div>
<div style="position:absolute;left:149.49px;top:83.70px;width:0.6px;height:1.5px;background:#b8b8b8;"></div>
<div style="position:absolute;left:151.38px;top:83.70px;width:0.6px;height:1.5px;background:#b8b8b8;"></div>
<div style="position:absolute;left:153.26px;top:83.70px;width:0.6px;height:1.5px;background:#b8b8b8;"></div>
<div style="position:absolute;left:155.15px;top:83.00px;width:0.6px;height:2.2px;background:#b8b8b8;"></div>
<div style="position:absolute;left:157.04px;top:83.70px;width:0.6px;height:1.5px;background:#b8b8b8;"></div>
<div style="position:absolute;left:158.92px;top:83.70px;width:0.6px;height:1.5px;background:#b8b8b8;"></div>
<div style="position:absolute;left:160.81px;top:83.70px;width:0.6px;height:1.5px;background:#b8b8b8;"></div>
<div style="position:absolute;left:162.69px;top:83.70px;width:0.6px;height:1.5px;background:#b8b8b8;"></div>
<div class="t" style="left:109.147px;width:400.0px;text-align:center;top:77px;font-size:12.0px;color:#7a7a7a;font-weight:normal;transform:scale(0.2787,0.3167) translateZ(0);transform-origin:0 0;-webkit-text-stroke:0.38px #7a7a7a;">8</div>
<div style="position:absolute;left:164.58px;top:82.00px;width:0.6px;height:3.2px;background:#b8b8b8;"></div>
<div style="position:absolute;left:166.47px;top:83.70px;width:0.6px;height:1.5px;background:#b8b8b8;"></div>
<div style="position:absolute;left:168.35px;top:83.70px;width:0.6px;height:1.5px;background:#b8b8b8;"></div>
<div style="position:absolute;left:170.24px;top:83.70px;width:0.6px;height:1.5px;background:#b8b8b8;"></div>
<div style="position:absolute;left:172.12px;top:83.70px;width:0.6px;height:1.5px;background:#b8b8b8;"></div>
<div style="position:absolute;left:174.01px;top:83.00px;width:0.6px;height:2.2px;background:#b8b8b8;"></div>
<div style="position:absolute;left:175.90px;top:83.70px;width:0.6px;height:1.5px;background:#b8b8b8;"></div>
<div style="position:absolute;left:177.78px;top:83.70px;width:0.6px;height:1.5px;background:#b8b8b8;"></div>
<div style="position:absolute;left:179.67px;top:83.70px;width:0.6px;height:1.5px;background:#b8b8b8;"></div>
<div style="position:absolute;left:181.55px;top:83.70px;width:0.6px;height:1.5px;background:#b8b8b8;"></div>
<div class="t" style="left:128.007px;width:400.0px;text-align:center;top:77px;font-size:12.0px;color:#7a7a7a;font-weight:normal;transform:scale(0.2787,0.3167) translateZ(0);transform-origin:0 0;-webkit-text-stroke:0.38px #7a7a7a;">9</div>
<div style="position:absolute;left:183.44px;top:82.00px;width:0.6px;height:3.2px;background:#b8b8b8;"></div>
<div style="position:absolute;left:185.33px;top:83.70px;width:0.6px;height:1.5px;background:#b8b8b8;"></div>
<div style="position:absolute;left:187.21px;top:83.70px;width:0.6px;height:1.5px;background:#b8b8b8;"></div>
<div style="position:absolute;left:189.10px;top:83.70px;width:0.6px;height:1.5px;background:#b8b8b8;"></div>
<div style="position:absolute;left:190.98px;top:83.70px;width:0.6px;height:1.5px;background:#b8b8b8;"></div>
<div style="position:absolute;left:192.87px;top:83.00px;width:0.6px;height:2.2px;background:#b8b8b8;"></div>
<div style="position:absolute;left:194.76px;top:83.70px;width:0.6px;height:1.5px;background:#b8b8b8;"></div>
<div style="position:absolute;left:196.64px;top:83.70px;width:0.6px;height:1.5px;background:#b8b8b8;"></div>
<div style="position:absolute;left:198.53px;top:83.70px;width:0.6px;height:1.5px;background:#b8b8b8;"></div>
<div style="position:absolute;left:200.41px;top:83.70px;width:0.6px;height:1.5px;background:#b8b8b8;"></div>
<div class="t" style="left:146.867px;width:400.0px;text-align:center;top:77px;font-size:12.0px;color:#7a7a7a;font-weight:normal;transform:scale(0.2787,0.3167) translateZ(0);transform-origin:0 0;-webkit-text-stroke:0.38px #7a7a7a;">10</div>
<div style="position:absolute;left:202.30px;top:82.00px;width:0.6px;height:3.2px;background:#b8b8b8;"></div>
<div style="position:absolute;left:204.19px;top:83.70px;width:0.6px;height:1.5px;background:#b8b8b8;"></div>
<div style="position:absolute;left:206.07px;top:83.70px;width:0.6px;height:1.5px;background:#b8b8b8;"></div>
<div style="position:absolute;left:207.96px;top:83.70px;width:0.6px;height:1.5px;background:#b8b8b8;"></div>
<div style="position:absolute;left:209.84px;top:83.70px;width:0.6px;height:1.5px;background:#b8b8b8;"></div>
<div style="position:absolute;left:211.73px;top:83.00px;width:0.6px;height:2.2px;background:#b8b8b8;"></div>
<div style="position:absolute;left:213.62px;top:83.70px;width:0.6px;height:1.5px;background:#b8b8b8;"></div>
<div style="position:absolute;left:215.50px;top:83.70px;width:0.6px;height:1.5px;background:#b8b8b8;"></div>
<div style="position:absolute;left:217.39px;top:83.70px;width:0.6px;height:1.5px;background:#b8b8b8;"></div>
<div style="position:absolute;left:219.27px;top:83.70px;width:0.6px;height:1.5px;background:#b8b8b8;"></div>
<div class="t" style="left:165.727px;width:400.0px;text-align:center;top:77px;font-size:12.0px;color:#7a7a7a;font-weight:normal;transform:scale(0.2787,0.3167) translateZ(0);transform-origin:0 0;-webkit-text-stroke:0.38px #7a7a7a;">11</div>
<div style="position:absolute;left:221.16px;top:82.00px;width:0.6px;height:3.2px;background:#b8b8b8;"></div>
<div style="position:absolute;left:223.05px;top:83.70px;width:0.6px;height:1.5px;background:#b8b8b8;"></div>
<div style="position:absolute;left:224.93px;top:83.70px;width:0.6px;height:1.5px;background:#b8b8b8;"></div>
<div style="position:absolute;left:226.82px;top:83.70px;width:0.6px;height:1.5px;background:#b8b8b8;"></div>
<div style="position:absolute;left:228.70px;top:83.70px;width:0.6px;height:1.5px;background:#b8b8b8;"></div>
<div style="position:absolute;left:230.59px;top:83.00px;width:0.6px;height:2.2px;background:#b8b8b8;"></div>
<div style="position:absolute;left:232.48px;top:83.70px;width:0.6px;height:1.5px;background:#b8b8b8;"></div>
<div style="position:absolute;left:234.36px;top:83.70px;width:0.6px;height:1.5px;background:#b8b8b8;"></div>
<div style="position:absolute;left:236.25px;top:83.70px;width:0.6px;height:1.5px;background:#b8b8b8;"></div>
<div style="position:absolute;left:238.13px;top:83.70px;width:0.6px;height:1.5px;background:#b8b8b8;"></div>
<div class="t" style="left:184.587px;width:400.0px;text-align:center;top:77px;font-size:12.0px;color:#7a7a7a;font-weight:normal;transform:scale(0.2787,0.3167) translateZ(0);transform-origin:0 0;-webkit-text-stroke:0.38px #7a7a7a;">12</div>
<div style="position:absolute;left:240.02px;top:82.00px;width:0.6px;height:3.2px;background:#b8b8b8;"></div>
<div style="position:absolute;left:241.91px;top:83.70px;width:0.6px;height:1.5px;background:#b8b8b8;"></div>
<div style="position:absolute;left:243.79px;top:83.70px;width:0.6px;height:1.5px;background:#b8b8b8;"></div>
<div style="position:absolute;left:245.68px;top:83.70px;width:0.6px;height:1.5px;background:#b8b8b8;"></div>
<div style="position:absolute;left:247.56px;top:83.70px;width:0.6px;height:1.5px;background:#b8b8b8;"></div>
<div style="position:absolute;left:249.45px;top:83.00px;width:0.6px;height:2.2px;background:#b8b8b8;"></div>
<div style="position:absolute;left:251.34px;top:83.70px;width:0.6px;height:1.5px;background:#b8b8b8;"></div>
<div style="position:absolute;left:253.22px;top:83.70px;width:0.6px;height:1.5px;background:#b8b8b8;"></div>
<div style="position:absolute;left:255.11px;top:83.70px;width:0.6px;height:1.5px;background:#b8b8b8;"></div>
<div style="position:absolute;left:256.99px;top:83.70px;width:0.6px;height:1.5px;background:#b8b8b8;"></div>
<div class="t" style="left:203.447px;width:400.0px;text-align:center;top:77px;font-size:12.0px;color:#7a7a7a;font-weight:normal;transform:scale(0.2787,0.3167) translateZ(0);transform-origin:0 0;-webkit-text-stroke:0.38px #7a7a7a;">13</div>
<div style="position:absolute;left:258.88px;top:82.00px;width:0.6px;height:3.2px;background:#b8b8b8;"></div>
<div style="position:absolute;left:260.77px;top:83.70px;width:0.6px;height:1.5px;background:#b8b8b8;"></div>
<div style="position:absolute;left:262.65px;top:83.70px;width:0.6px;height:1.5px;background:#b8b8b8;"></div>
<div style="position:absolute;left:264.54px;top:83.70px;width:0.6px;height:1.5px;background:#b8b8b8;"></div>
<div style="position:absolute;left:266.42px;top:83.70px;width:0.6px;height:1.5px;background:#b8b8b8;"></div>
<div style="position:absolute;left:268.31px;top:83.00px;width:0.6px;height:2.2px;background:#b8b8b8;"></div>
<div style="position:absolute;left:270.20px;top:83.70px;width:0.6px;height:1.5px;background:#b8b8b8;"></div>
<div style="position:absolute;left:272.08px;top:83.70px;width:0.6px;height:1.5px;background:#b8b8b8;"></div>
<div style="position:absolute;left:273.97px;top:83.70px;width:0.6px;height:1.5px;background:#b8b8b8;"></div>
<div style="position:absolute;left:275.85px;top:83.70px;width:0.6px;height:1.5px;background:#b8b8b8;"></div>
<div class="t" style="left:222.307px;width:400.0px;text-align:center;top:77px;font-size:12.0px;color:#7a7a7a;font-weight:normal;transform:scale(0.2787,0.3167) translateZ(0);transform-origin:0 0;-webkit-text-stroke:0.38px #7a7a7a;">14</div>
<div style="position:absolute;left:277.74px;top:82.00px;width:0.6px;height:3.2px;background:#b8b8b8;"></div>
<div style="position:absolute;left:279.63px;top:83.70px;width:0.6px;height:1.5px;background:#b8b8b8;"></div>
<div style="position:absolute;left:281.51px;top:83.70px;width:0.6px;height:1.5px;background:#b8b8b8;"></div>
<div style="position:absolute;left:283.40px;top:83.70px;width:0.6px;height:1.5px;background:#b8b8b8;"></div>
<div style="position:absolute;left:285.28px;top:83.70px;width:0.6px;height:1.5px;background:#b8b8b8;"></div>
<div style="position:absolute;left:287.17px;top:83.00px;width:0.6px;height:2.2px;background:#b8b8b8;"></div>
<div style="position:absolute;left:289.06px;top:83.70px;width:0.6px;height:1.5px;background:#b8b8b8;"></div>
<div style="position:absolute;left:290.94px;top:83.70px;width:0.6px;height:1.5px;background:#b8b8b8;"></div>
<div style="position:absolute;left:292.83px;top:83.70px;width:0.6px;height:1.5px;background:#b8b8b8;"></div>
<div style="position:absolute;left:294.71px;top:83.70px;width:0.6px;height:1.5px;background:#b8b8b8;"></div>
<div class="t" style="left:241.167px;width:400.0px;text-align:center;top:77px;font-size:12.0px;color:#7a7a7a;font-weight:normal;transform:scale(0.2787,0.3167) translateZ(0);transform-origin:0 0;-webkit-text-stroke:0.38px #7a7a7a;">15</div>
<div style="position:absolute;left:296.60px;top:82.00px;width:0.6px;height:3.2px;background:#b8b8b8;"></div>
<div style="position:absolute;left:298.49px;top:83.70px;width:0.6px;height:1.5px;background:#b8b8b8;"></div>
<div style="position:absolute;left:300.37px;top:83.70px;width:0.6px;height:1.5px;background:#b8b8b8;"></div>
<div style="position:absolute;left:302.26px;top:83.70px;width:0.6px;height:1.5px;background:#b8b8b8;"></div>
<div style="position:absolute;left:304.14px;top:83.70px;width:0.6px;height:1.5px;background:#b8b8b8;"></div>
<div style="position:absolute;left:306.03px;top:83.00px;width:0.6px;height:2.2px;background:#b8b8b8;"></div>
<div style="position:absolute;left:307.92px;top:83.70px;width:0.6px;height:1.5px;background:#b8b8b8;"></div>
<div style="position:absolute;left:309.80px;top:83.70px;width:0.6px;height:1.5px;background:#b8b8b8;"></div>
<div style="position:absolute;left:311.69px;top:83.70px;width:0.6px;height:1.5px;background:#b8b8b8;"></div>
<div style="position:absolute;left:313.57px;top:83.70px;width:0.6px;height:1.5px;background:#b8b8b8;"></div>
<div class="t" style="left:260.027px;width:400.0px;text-align:center;top:77px;font-size:12.0px;color:#7a7a7a;font-weight:normal;transform:scale(0.2787,0.3167) translateZ(0);transform-origin:0 0;-webkit-text-stroke:0.38px #7a7a7a;">16</div>
<div style="position:absolute;left:315.46px;top:82.00px;width:0.6px;height:3.2px;background:#b8b8b8;"></div>
<div style="position:absolute;left:317.35px;top:83.70px;width:0.6px;height:1.5px;background:#b8b8b8;"></div>
<div style="position:absolute;left:319.23px;top:83.70px;width:0.6px;height:1.5px;background:#b8b8b8;"></div>
<div style="position:absolute;left:321.12px;top:83.70px;width:0.6px;height:1.5px;background:#b8b8b8;"></div>
<div style="position:absolute;left:323.00px;top:83.70px;width:0.6px;height:1.5px;background:#b8b8b8;"></div>
<div style="position:absolute;left:324.89px;top:83.00px;width:0.6px;height:2.2px;background:#b8b8b8;"></div>
<div style="position:absolute;left:326.78px;top:83.70px;width:0.6px;height:1.5px;background:#b8b8b8;"></div>
<div style="position:absolute;left:328.66px;top:83.70px;width:0.6px;height:1.5px;background:#b8b8b8;"></div>
<div style="position:absolute;left:330.55px;top:83.70px;width:0.6px;height:1.5px;background:#b8b8b8;"></div>
<div style="position:absolute;left:332.43px;top:83.70px;width:0.6px;height:1.5px;background:#b8b8b8;"></div>
<div class="t" style="left:278.887px;width:400.0px;text-align:center;top:77px;font-size:12.0px;color:#7a7a7a;font-weight:normal;transform:scale(0.2787,0.3167) translateZ(0);transform-origin:0 0;-webkit-text-stroke:0.38px #7a7a7a;">17</div>
<div style="position:absolute;left:334.32px;top:82.00px;width:0.6px;height:3.2px;background:#b8b8b8;"></div>
<div style="position:absolute;left:336.21px;top:83.70px;width:0.6px;height:1.5px;background:#b8b8b8;"></div>
<div style="position:absolute;left:338.09px;top:83.70px;width:0.6px;height:1.5px;background:#b8b8b8;"></div>
<div style="position:absolute;left:339.98px;top:83.70px;width:0.6px;height:1.5px;background:#b8b8b8;"></div>
<div style="position:absolute;left:341.86px;top:83.70px;width:0.6px;height:1.5px;background:#b8b8b8;"></div>
<div style="position:absolute;left:343.75px;top:83.00px;width:0.6px;height:2.2px;background:#b8b8b8;"></div>
<div style="position:absolute;left:345.64px;top:83.70px;width:0.6px;height:1.5px;background:#b8b8b8;"></div>
<div style="position:absolute;left:347.52px;top:83.70px;width:0.6px;height:1.5px;background:#b8b8b8;"></div>
<div style="position:absolute;left:349.41px;top:83.70px;width:0.6px;height:1.5px;background:#b8b8b8;"></div>
<div style="position:absolute;left:351.29px;top:83.70px;width:0.6px;height:1.5px;background:#b8b8b8;"></div>
<div class="t" style="left:297.747px;width:400.0px;text-align:center;top:77px;font-size:12.0px;color:#7a7a7a;font-weight:normal;transform:scale(0.2787,0.3167) translateZ(0);transform-origin:0 0;-webkit-text-stroke:0.38px #7a7a7a;">18</div>
<div style="position:absolute;left:353.18px;top:82.00px;width:0.6px;height:3.2px;background:#b8b8b8;"></div>
<div style="position:absolute;left:355.07px;top:83.70px;width:0.6px;height:1.5px;background:#b8b8b8;"></div>
<div style="position:absolute;left:356.95px;top:83.70px;width:0.6px;height:1.5px;background:#b8b8b8;"></div>
<div style="position:absolute;left:358.84px;top:83.70px;width:0.6px;height:1.5px;background:#b8b8b8;"></div>
<div style="position:absolute;left:360.72px;top:83.70px;width:0.6px;height:1.5px;background:#b8b8b8;"></div>
<div style="position:absolute;left:362.61px;top:83.00px;width:0.6px;height:2.2px;background:#b8b8b8;"></div>
<div style="position:absolute;left:364.50px;top:83.70px;width:0.6px;height:1.5px;background:#b8b8b8;"></div>
<div style="position:absolute;left:366.38px;top:83.70px;width:0.6px;height:1.5px;background:#b8b8b8;"></div>
<div style="position:absolute;left:368.27px;top:83.70px;width:0.6px;height:1.5px;background:#b8b8b8;"></div>
<div style="position:absolute;left:370.15px;top:83.70px;width:0.6px;height:1.5px;background:#b8b8b8;"></div>
<div class="t" style="left:316.607px;width:400.0px;text-align:center;top:77px;font-size:12.0px;color:#7a7a7a;font-weight:normal;transform:scale(0.2787,0.3167) translateZ(0);transform-origin:0 0;-webkit-text-stroke:0.38px #7a7a7a;">19</div>
<div style="position:absolute;left:372.04px;top:82.00px;width:0.6px;height:3.2px;background:#b8b8b8;"></div>
<div style="position:absolute;left:373.93px;top:83.70px;width:0.6px;height:1.5px;background:#b8b8b8;"></div>
<div style="position:absolute;left:375.81px;top:83.70px;width:0.6px;height:1.5px;background:#b8b8b8;"></div>
<div style="position:absolute;left:377.70px;top:83.70px;width:0.6px;height:1.5px;background:#b8b8b8;"></div>
<div style="position:absolute;left:379.58px;top:83.70px;width:0.6px;height:1.5px;background:#b8b8b8;"></div>
<div style="position:absolute;left:381.47px;top:83.00px;width:0.6px;height:2.2px;background:#b8b8b8;"></div>
<div style="position:absolute;left:383.36px;top:83.70px;width:0.6px;height:1.5px;background:#b8b8b8;"></div>
<div style="position:absolute;left:385.24px;top:83.70px;width:0.6px;height:1.5px;background:#b8b8b8;"></div>
<div style="position:absolute;left:387.13px;top:83.70px;width:0.6px;height:1.5px;background:#b8b8b8;"></div>
<div style="position:absolute;left:389.01px;top:83.70px;width:0.6px;height:1.5px;background:#b8b8b8;"></div>
<div class="t" style="left:335.467px;width:400.0px;text-align:center;top:77px;font-size:12.0px;color:#7a7a7a;font-weight:normal;transform:scale(0.2787,0.3167) translateZ(0);transform-origin:0 0;-webkit-text-stroke:0.38px #7a7a7a;">20</div>
<div style="position:absolute;left:390.90px;top:82.00px;width:0.6px;height:3.2px;background:#b8b8b8;"></div>
<div style="position:absolute;left:392.79px;top:83.70px;width:0.6px;height:1.5px;background:#b8b8b8;"></div>
<div style="position:absolute;left:394.67px;top:83.70px;width:0.6px;height:1.5px;background:#b8b8b8;"></div>
<div style="position:absolute;left:396.56px;top:83.70px;width:0.6px;height:1.5px;background:#b8b8b8;"></div>
<div style="position:absolute;left:398.44px;top:83.70px;width:0.6px;height:1.5px;background:#b8b8b8;"></div>
<div style="position:absolute;left:400.33px;top:83.00px;width:0.6px;height:2.2px;background:#b8b8b8;"></div>
<div style="position:absolute;left:402.22px;top:83.70px;width:0.6px;height:1.5px;background:#b8b8b8;"></div>
<div style="position:absolute;left:404.10px;top:83.70px;width:0.6px;height:1.5px;background:#b8b8b8;"></div>
<div style="position:absolute;left:405.99px;top:83.70px;width:0.6px;height:1.5px;background:#b8b8b8;"></div>
<div style="position:absolute;left:407.87px;top:83.70px;width:0.6px;height:1.5px;background:#b8b8b8;"></div>
<div class="t" style="left:354.327px;width:400.0px;text-align:center;top:77px;font-size:12.0px;color:#7a7a7a;font-weight:normal;transform:scale(0.2787,0.3167) translateZ(0);transform-origin:0 0;-webkit-text-stroke:0.38px #7a7a7a;">21</div>
<div style="position:absolute;left:409.76px;top:82.00px;width:0.6px;height:3.2px;background:#b8b8b8;"></div>
<div style="position:absolute;left:411.65px;top:83.70px;width:0.6px;height:1.5px;background:#b8b8b8;"></div>
<div style="position:absolute;left:413.53px;top:83.70px;width:0.6px;height:1.5px;background:#b8b8b8;"></div>
<div style="position:absolute;left:415.42px;top:83.70px;width:0.6px;height:1.5px;background:#b8b8b8;"></div>
<div style="position:absolute;left:417.30px;top:83.70px;width:0.6px;height:1.5px;background:#b8b8b8;"></div>
<div style="position:absolute;left:419.19px;top:83.00px;width:0.6px;height:2.2px;background:#b8b8b8;"></div>
<div style="position:absolute;left:421.08px;top:83.70px;width:0.6px;height:1.5px;background:#b8b8b8;"></div>
<div style="position:absolute;left:422.96px;top:83.70px;width:0.6px;height:1.5px;background:#b8b8b8;"></div>
<div style="position:absolute;left:424.85px;top:83.70px;width:0.6px;height:1.5px;background:#b8b8b8;"></div>
<div style="position:absolute;left:426.73px;top:83.70px;width:0.6px;height:1.5px;background:#b8b8b8;"></div>
<div class="t" style="left:373.187px;width:400.0px;text-align:center;top:77px;font-size:12.0px;color:#7a7a7a;font-weight:normal;transform:scale(0.2787,0.3167) translateZ(0);transform-origin:0 0;-webkit-text-stroke:0.38px #7a7a7a;">22</div>
<div style="position:absolute;left:428.62px;top:82.00px;width:0.6px;height:3.2px;background:#b8b8b8;"></div>
<div style="position:absolute;left:430.51px;top:83.70px;width:0.6px;height:1.5px;background:#b8b8b8;"></div>
<div style="position:absolute;left:432.39px;top:83.70px;width:0.6px;height:1.5px;background:#b8b8b8;"></div>
<div style="position:absolute;left:434.28px;top:83.70px;width:0.6px;height:1.5px;background:#b8b8b8;"></div>
<div style="position:absolute;left:436.16px;top:83.70px;width:0.6px;height:1.5px;background:#b8b8b8;"></div>
<div style="position:absolute;left:438.05px;top:83.00px;width:0.6px;height:2.2px;background:#b8b8b8;"></div>
<div style="position:absolute;left:439.94px;top:83.70px;width:0.6px;height:1.5px;background:#b8b8b8;"></div>
<div style="position:absolute;left:441.82px;top:83.70px;width:0.6px;height:1.5px;background:#b8b8b8;"></div>
<div style="position:absolute;left:443.71px;top:83.70px;width:0.6px;height:1.5px;background:#b8b8b8;"></div>
<div style="position:absolute;left:445.59px;top:83.70px;width:0.6px;height:1.5px;background:#b8b8b8;"></div>
<div class="t" style="left:392.047px;width:400.0px;text-align:center;top:77px;font-size:12.0px;color:#7a7a7a;font-weight:normal;transform:scale(0.2787,0.3167) translateZ(0);transform-origin:0 0;-webkit-text-stroke:0.38px #7a7a7a;">23</div>
<div style="position:absolute;left:447.48px;top:82.00px;width:0.6px;height:3.2px;background:#b8b8b8;"></div>
<div style="position:absolute;left:449.37px;top:83.70px;width:0.6px;height:1.5px;background:#b8b8b8;"></div>
<div style="position:absolute;left:451.25px;top:83.70px;width:0.6px;height:1.5px;background:#b8b8b8;"></div>
<div style="position:absolute;left:453.14px;top:83.70px;width:0.6px;height:1.5px;background:#b8b8b8;"></div>
<div style="position:absolute;left:455.02px;top:83.70px;width:0.6px;height:1.5px;background:#b8b8b8;"></div>
<div style="position:absolute;left:456.91px;top:83.00px;width:0.6px;height:2.2px;background:#b8b8b8;"></div>
<div style="position:absolute;left:458.80px;top:83.70px;width:0.6px;height:1.5px;background:#b8b8b8;"></div>
<div style="position:absolute;left:460.68px;top:83.70px;width:0.6px;height:1.5px;background:#b8b8b8;"></div>
<div style="position:absolute;left:462.57px;top:83.70px;width:0.6px;height:1.5px;background:#b8b8b8;"></div>
<div style="position:absolute;left:464.45px;top:83.70px;width:0.6px;height:1.5px;background:#b8b8b8;"></div>
<div class="t" style="left:410.907px;width:400.0px;text-align:center;top:77px;font-size:12.0px;color:#7a7a7a;font-weight:normal;transform:scale(0.2787,0.3167) translateZ(0);transform-origin:0 0;-webkit-text-stroke:0.38px #7a7a7a;">24</div>
<div style="position:absolute;left:466.34px;top:82.00px;width:0.6px;height:3.2px;background:#b8b8b8;"></div>
<div style="position:absolute;left:468.23px;top:83.70px;width:0.6px;height:1.5px;background:#b8b8b8;"></div>
<div style="position:absolute;left:470.11px;top:83.70px;width:0.6px;height:1.5px;background:#b8b8b8;"></div>
<div style="position:absolute;left:472.00px;top:83.70px;width:0.6px;height:1.5px;background:#b8b8b8;"></div>
<div style="position:absolute;left:473.88px;top:83.70px;width:0.6px;height:1.5px;background:#b8b8b8;"></div>
<div style="position:absolute;left:475.77px;top:83.00px;width:0.6px;height:2.2px;background:#b8b8b8;"></div>
<div style="position:absolute;left:477.66px;top:83.70px;width:0.6px;height:1.5px;background:#b8b8b8;"></div>
<div style="position:absolute;left:479.54px;top:83.70px;width:0.6px;height:1.5px;background:#b8b8b8;"></div>
<div style="position:absolute;left:481.43px;top:83.70px;width:0.6px;height:1.5px;background:#b8b8b8;"></div>
<div style="position:absolute;left:483.31px;top:83.70px;width:0.6px;height:1.5px;background:#b8b8b8;"></div>
<div class="t" style="left:429.767px;width:400.0px;text-align:center;top:77px;font-size:12.0px;color:#7a7a7a;font-weight:normal;transform:scale(0.2787,0.3167) translateZ(0);transform-origin:0 0;-webkit-text-stroke:0.38px #7a7a7a;">25</div>
<div style="position:absolute;left:485.20px;top:82.00px;width:0.6px;height:3.2px;background:#b8b8b8;"></div>
<div style="position:absolute;left:487.09px;top:83.70px;width:0.6px;height:1.5px;background:#b8b8b8;"></div>
<div style="position:absolute;left:488.97px;top:83.70px;width:0.6px;height:1.5px;background:#b8b8b8;"></div>
<div style="position:absolute;left:490.86px;top:83.70px;width:0.6px;height:1.5px;background:#b8b8b8;"></div>
<div style="position:absolute;left:492.74px;top:83.70px;width:0.6px;height:1.5px;background:#b8b8b8;"></div>
<div style="position:absolute;left:494.63px;top:83.00px;width:0.6px;height:2.2px;background:#b8b8b8;"></div>
<div style="position:absolute;left:496.52px;top:83.70px;width:0.6px;height:1.5px;background:#b8b8b8;"></div>
<div style="position:absolute;left:498.40px;top:83.70px;width:0.6px;height:1.5px;background:#b8b8b8;"></div>
<div style="position:absolute;left:500.29px;top:83.70px;width:0.6px;height:1.5px;background:#b8b8b8;"></div>
<div style="position:absolute;left:502.17px;top:83.70px;width:0.6px;height:1.5px;background:#b8b8b8;"></div>
<div class="t" style="left:448.627px;width:400.0px;text-align:center;top:77px;font-size:12.0px;color:#7a7a7a;font-weight:normal;transform:scale(0.2787,0.3167) translateZ(0);transform-origin:0 0;-webkit-text-stroke:0.38px #7a7a7a;">26</div>
<div style="position:absolute;left:504.06px;top:82.00px;width:0.6px;height:3.2px;background:#b8b8b8;"></div>
<div style="position:absolute;left:505.95px;top:83.70px;width:0.6px;height:1.5px;background:#b8b8b8;"></div>
<div style="position:absolute;left:507.83px;top:83.70px;width:0.6px;height:1.5px;background:#b8b8b8;"></div>
<div style="position:absolute;left:509.72px;top:83.70px;width:0.6px;height:1.5px;background:#b8b8b8;"></div>
<div style="position:absolute;left:511.60px;top:83.70px;width:0.6px;height:1.5px;background:#b8b8b8;"></div>
<div style="position:absolute;left:513.49px;top:83.00px;width:0.6px;height:2.2px;background:#b8b8b8;"></div>
<div style="position:absolute;left:515.38px;top:83.70px;width:0.6px;height:1.5px;background:#b8b8b8;"></div>
<div style="position:absolute;left:517.26px;top:83.70px;width:0.6px;height:1.5px;background:#b8b8b8;"></div>
<div style="position:absolute;left:519.15px;top:83.70px;width:0.6px;height:1.5px;background:#b8b8b8;"></div>
<div style="position:absolute;left:521.03px;top:83.70px;width:0.6px;height:1.5px;background:#b8b8b8;"></div>
<div class="t" style="left:467.487px;width:400.0px;text-align:center;top:77px;font-size:12.0px;color:#7a7a7a;font-weight:normal;transform:scale(0.2787,0.3167) translateZ(0);transform-origin:0 0;-webkit-text-stroke:0.38px #7a7a7a;">27</div>
<div style="position:absolute;left:522.92px;top:82.00px;width:0.6px;height:3.2px;background:#b8b8b8;"></div>
<div style="position:absolute;left:524.81px;top:83.70px;width:0.6px;height:1.5px;background:#b8b8b8;"></div>
<div style="position:absolute;left:526.69px;top:83.70px;width:0.6px;height:1.5px;background:#b8b8b8;"></div>
<div style="position:absolute;left:528.58px;top:83.70px;width:0.6px;height:1.5px;background:#b8b8b8;"></div>
<div style="position:absolute;left:530.46px;top:83.70px;width:0.6px;height:1.5px;background:#b8b8b8;"></div>
<div style="position:absolute;left:532.35px;top:83.00px;width:0.6px;height:2.2px;background:#b8b8b8;"></div>
<div style="position:absolute;left:534.24px;top:83.70px;width:0.6px;height:1.5px;background:#b8b8b8;"></div>
<div style="position:absolute;left:536.12px;top:83.70px;width:0.6px;height:1.5px;background:#b8b8b8;"></div>
<div style="position:absolute;left:538.01px;top:83.70px;width:0.6px;height:1.5px;background:#b8b8b8;"></div>
<div style="position:absolute;left:539.89px;top:83.70px;width:0.6px;height:1.5px;background:#b8b8b8;"></div>
<div class="t" style="left:486.347px;width:400.0px;text-align:center;top:77px;font-size:12.0px;color:#7a7a7a;font-weight:normal;transform:scale(0.2787,0.3167) translateZ(0);transform-origin:0 0;-webkit-text-stroke:0.38px #7a7a7a;">28</div>
<div style="position:absolute;left:541.78px;top:82.00px;width:0.6px;height:3.2px;background:#b8b8b8;"></div>
<div style="position:absolute;left:543.67px;top:83.70px;width:0.6px;height:1.5px;background:#b8b8b8;"></div>
<div style="position:absolute;left:545.55px;top:83.70px;width:0.6px;height:1.5px;background:#b8b8b8;"></div>
<div style="position:absolute;left:547.44px;top:83.70px;width:0.6px;height:1.5px;background:#b8b8b8;"></div>
<div style="position:absolute;left:549.32px;top:83.70px;width:0.6px;height:1.5px;background:#b8b8b8;"></div>
<div style="position:absolute;left:551.21px;top:83.00px;width:0.6px;height:2.2px;background:#b8b8b8;"></div>
<div style="position:absolute;left:553.10px;top:83.70px;width:0.6px;height:1.5px;background:#b8b8b8;"></div>
<div style="position:absolute;left:554.98px;top:83.70px;width:0.6px;height:1.5px;background:#b8b8b8;"></div>
<div style="position:absolute;left:556.87px;top:83.70px;width:0.6px;height:1.5px;background:#b8b8b8;"></div>
<div style="position:absolute;left:558.75px;top:83.70px;width:0.6px;height:1.5px;background:#b8b8b8;"></div>
<div class="t" style="left:505.207px;width:400.0px;text-align:center;top:77px;font-size:12.0px;color:#7a7a7a;font-weight:normal;transform:scale(0.2787,0.3167) translateZ(0);transform-origin:0 0;-webkit-text-stroke:0.38px #7a7a7a;">29</div>
<div style="position:absolute;left:560.64px;top:82.00px;width:0.6px;height:3.2px;background:#b8b8b8;"></div>
<div style="position:absolute;left:562.53px;top:83.70px;width:0.6px;height:1.5px;background:#b8b8b8;"></div>
<div style="position:absolute;left:564.41px;top:83.70px;width:0.6px;height:1.5px;background:#b8b8b8;"></div>
<div style="position:absolute;left:566.30px;top:83.70px;width:0.6px;height:1.5px;background:#b8b8b8;"></div>
<div style="position:absolute;left:568.18px;top:83.70px;width:0.6px;height:1.5px;background:#b8b8b8;"></div>
<div style="position:absolute;left:570.07px;top:83.00px;width:0.6px;height:2.2px;background:#b8b8b8;"></div>
<div style="position:absolute;left:571.96px;top:83.70px;width:0.6px;height:1.5px;background:#b8b8b8;"></div>
<div style="position:absolute;left:573.84px;top:83.70px;width:0.6px;height:1.5px;background:#b8b8b8;"></div>
<div style="position:absolute;left:575.73px;top:83.70px;width:0.6px;height:1.5px;background:#b8b8b8;"></div>
<div style="position:absolute;left:577.61px;top:83.70px;width:0.6px;height:1.5px;background:#b8b8b8;"></div>
<div class="t" style="left:524.067px;width:400.0px;text-align:center;top:77px;font-size:12.0px;color:#7a7a7a;font-weight:normal;transform:scale(0.2787,0.3167) translateZ(0);transform-origin:0 0;-webkit-text-stroke:0.38px #7a7a7a;">30</div>
<div style="position:absolute;left:579.50px;top:82.00px;width:0.6px;height:3.2px;background:#b8b8b8;"></div>
<div style="position:absolute;left:581.39px;top:83.70px;width:0.6px;height:1.5px;background:#b8b8b8;"></div>
<div style="position:absolute;left:583.27px;top:83.70px;width:0.6px;height:1.5px;background:#b8b8b8;"></div>
<div style="position:absolute;left:585.16px;top:83.70px;width:0.6px;height:1.5px;background:#b8b8b8;"></div>
<div style="position:absolute;left:587.04px;top:83.70px;width:0.6px;height:1.5px;background:#b8b8b8;"></div>
<div style="position:absolute;left:588.93px;top:83.00px;width:0.6px;height:2.2px;background:#b8b8b8;"></div>
<div style="position:absolute;left:590.82px;top:83.70px;width:0.6px;height:1.5px;background:#b8b8b8;"></div>
<div style="position:absolute;left:592.70px;top:83.70px;width:0.6px;height:1.5px;background:#b8b8b8;"></div>
<div style="position:absolute;left:594.59px;top:83.70px;width:0.6px;height:1.5px;background:#b8b8b8;"></div>
<div style="position:absolute;left:596.47px;top:83.70px;width:0.6px;height:1.5px;background:#b8b8b8;"></div>
<div class="t" style="left:542.927px;width:400.0px;text-align:center;top:77px;font-size:12.0px;color:#7a7a7a;font-weight:normal;transform:scale(0.2787,0.3167) translateZ(0);transform-origin:0 0;-webkit-text-stroke:0.38px #7a7a7a;">31</div>
<div style="position:absolute;left:598.36px;top:82.00px;width:0.6px;height:3.2px;background:#b8b8b8;"></div>
<div style="position:absolute;left:600.25px;top:83.70px;width:0.6px;height:1.5px;background:#b8b8b8;"></div>
<div style="position:absolute;left:602.13px;top:83.70px;width:0.6px;height:1.5px;background:#b8b8b8;"></div>
<div style="position:absolute;left:604.02px;top:83.70px;width:0.6px;height:1.5px;background:#b8b8b8;"></div>
<div style="position:absolute;left:605.90px;top:83.70px;width:0.6px;height:1.5px;background:#b8b8b8;"></div>
<div style="position:absolute;left:607.79px;top:83.00px;width:0.6px;height:2.2px;background:#b8b8b8;"></div>
<div style="position:absolute;left:609.68px;top:83.70px;width:0.6px;height:1.5px;background:#b8b8b8;"></div>
<div style="position:absolute;left:611.56px;top:83.70px;width:0.6px;height:1.5px;background:#b8b8b8;"></div>
<div style="position:absolute;left:613.45px;top:83.70px;width:0.6px;height:1.5px;background:#b8b8b8;"></div>
<div style="position:absolute;left:615.33px;top:83.70px;width:0.6px;height:1.5px;background:#b8b8b8;"></div>
<div class="t" style="left:561.787px;width:400.0px;text-align:center;top:77px;font-size:12.0px;color:#7a7a7a;font-weight:normal;transform:scale(0.2787,0.3167) translateZ(0);transform-origin:0 0;-webkit-text-stroke:0.38px #7a7a7a;">32</div>
<div style="position:absolute;left:617.22px;top:82.00px;width:0.6px;height:3.2px;background:#b8b8b8;"></div>
<div style="position:absolute;left:619.11px;top:83.70px;width:0.6px;height:1.5px;background:#b8b8b8;"></div>
<div style="position:absolute;left:620.99px;top:83.70px;width:0.6px;height:1.5px;background:#b8b8b8;"></div>
<div style="position:absolute;left:622.88px;top:83.70px;width:0.6px;height:1.5px;background:#b8b8b8;"></div>
<div style="position:absolute;left:624.76px;top:83.70px;width:0.6px;height:1.5px;background:#b8b8b8;"></div>
<div style="position:absolute;left:626.65px;top:83.00px;width:0.6px;height:2.2px;background:#b8b8b8;"></div>
<div style="position:absolute;left:628.54px;top:83.70px;width:0.6px;height:1.5px;background:#b8b8b8;"></div>
<div style="position:absolute;left:630.42px;top:83.70px;width:0.6px;height:1.5px;background:#b8b8b8;"></div>
<div style="position:absolute;left:632.31px;top:83.70px;width:0.6px;height:1.5px;background:#b8b8b8;"></div>
<div style="position:absolute;left:634.19px;top:83.70px;width:0.6px;height:1.5px;background:#b8b8b8;"></div>
<div class="t" style="left:580.647px;width:400.0px;text-align:center;top:77px;font-size:12.0px;color:#7a7a7a;font-weight:normal;transform:scale(0.2787,0.3167) translateZ(0);transform-origin:0 0;-webkit-text-stroke:0.38px #7a7a7a;">33</div>
<div style="position:absolute;left:636.08px;top:82.00px;width:0.6px;height:3.2px;background:#b8b8b8;"></div>
<div style="position:absolute;left:637.97px;top:83.70px;width:0.6px;height:1.5px;background:#b8b8b8;"></div>
<div style="position:absolute;left:639.85px;top:83.70px;width:0.6px;height:1.5px;background:#b8b8b8;"></div>
<div style="position:absolute;left:641.74px;top:83.70px;width:0.6px;height:1.5px;background:#b8b8b8;"></div>
<div style="position:absolute;left:643.62px;top:83.70px;width:0.6px;height:1.5px;background:#b8b8b8;"></div>
<div style="position:absolute;left:645.51px;top:83.00px;width:0.6px;height:2.2px;background:#b8b8b8;"></div>
<div style="position:absolute;left:647.40px;top:83.70px;width:0.6px;height:1.5px;background:#b8b8b8;"></div>
<div style="position:absolute;left:649.28px;top:83.70px;width:0.6px;height:1.5px;background:#b8b8b8;"></div>
<div style="position:absolute;left:651.17px;top:83.70px;width:0.6px;height:1.5px;background:#b8b8b8;"></div>
<div style="position:absolute;left:653.05px;top:83.70px;width:0.6px;height:1.5px;background:#b8b8b8;"></div>
<div class="t" style="left:599.507px;width:400.0px;text-align:center;top:77px;font-size:12.0px;color:#7a7a7a;font-weight:normal;transform:scale(0.2787,0.3167) translateZ(0);transform-origin:0 0;-webkit-text-stroke:0.38px #7a7a7a;">34</div>
<div style="position:absolute;left:654.94px;top:82.00px;width:0.6px;height:3.2px;background:#b8b8b8;"></div>
<div style="position:absolute;left:656.83px;top:83.70px;width:0.6px;height:1.5px;background:#b8b8b8;"></div>
<div style="position:absolute;left:658.71px;top:83.70px;width:0.6px;height:1.5px;background:#b8b8b8;"></div>
<div style="position:absolute;left:1.9px;top:85.6px;width:333.6px;height:303.4px;background:#f0f0f0;"></div>
<div style="position:absolute;left:1.9px;top:85.8px;width:333.6px;height:7.6000000000000085px;background:linear-gradient(#fafafa,#efefef);"></div>
<div style="position:absolute;left:1.9px;top:92.60000000000001px;width:333.6px;height:0.8px;background:#c8c8c8;"></div>
<svg style="position:absolute;left:4.6px;top:88.10px" width="5" height="2.6"><path d="M0.3 0.3h4.2L2.4 2.3z" fill="#ecd97c" stroke="#b8a868" stroke-width="0.4"/></svg>
<div class="t" style="left:10.8px;top:86px;font-size:12.0px;color:#1a1a1a;font-weight:normal;transform:scale(0.3563,0.4167) translateZ(0);transform-origin:0 0;-webkit-text-stroke:0.38px #1a1a1a;">Cabecera de página</div>
<div style="position:absolute;left:1.9px;top:93.3px;width:333.6px;height:0.9px;background:repeating-linear-gradient(90deg,#c0c0c0 0,#c0c0c0 2px,#e4e4e4 2px,#e4e4e4 2.7px);"></div>
<div style="position:absolute;left:1.9px;top:93.3px;width:12.1px;height:0.9px;background:#9a9a9a;"></div>
<div style="position:absolute;left:1.9px;top:94.2px;width:333.6px;height:1.3px;background:#f6f6f6;"></div>
<div style="position:absolute;left:1.9px;top:95.5px;width:333.6px;height:8.799999999999997px;background:linear-gradient(#fafafa,#efefef);"></div>
<div style="position:absolute;left:1.9px;top:103.5px;width:333.6px;height:0.8px;background:#c8c8c8;"></div>
<svg style="position:absolute;left:4.6px;top:98.70px" width="5" height="2.6"><path d="M0.3 0.3h4.2L2.4 2.3z" fill="#ecd97c" stroke="#b8a868" stroke-width="0.4"/></svg>
<div class="t" style="left:10.8px;top:97px;font-size:12.0px;color:#1a1a1a;font-weight:normal;transform:scale(0.3563,0.4167) translateZ(0);transform-origin:0 0;-webkit-text-stroke:0.38px #1a1a1a;">Cabecera de agrupamiento [DetalleFacturas.Cliente]</div>
<div style="position:absolute;left:1.9px;top:104.3px;width:12px;height:170.89999999999998px;background:#f0f0f0;"></div>
<div style="position:absolute;left:1.9px;top:104.3px;width:1.1px;height:170.89999999999998px;background:#e2e2e2;"></div>
<div style="position:absolute;left:14px;top:104.3px;width:321.5px;height:170.89999999999998px;background-color:#fff;background-image:radial-gradient(circle at 1.2px 1.2px,#e3e3e3 0.3px,rgba(240,240,240,0) 0.72px);background-size:2.41px 2.41px;"></div>
<div style="position:absolute;left:11.00px;top:104.40px;width:3.0px;height:0.6px;background:#b8b8b8;"></div>
<div style="position:absolute;left:12.60px;top:106.29px;width:1.4px;height:0.6px;background:#b8b8b8;"></div>
<div style="position:absolute;left:12.60px;top:108.17px;width:1.4px;height:0.6px;background:#b8b8b8;"></div>
<div style="position:absolute;left:12.60px;top:110.06px;width:1.4px;height:0.6px;background:#b8b8b8;"></div>
<div style="position:absolute;left:12.60px;top:111.94px;width:1.4px;height:0.6px;background:#b8b8b8;"></div>
<div style="position:absolute;left:11.80px;top:113.83px;width:2.2px;height:0.6px;background:#b8b8b8;"></div>
<div style="position:absolute;left:12.60px;top:115.72px;width:1.4px;height:0.6px;background:#b8b8b8;"></div>
<div style="position:absolute;left:12.60px;top:117.60px;width:1.4px;height:0.6px;background:#b8b8b8;"></div>
<div style="position:absolute;left:12.60px;top:119.49px;width:1.4px;height:0.6px;background:#b8b8b8;"></div>
<div style="position:absolute;left:12.60px;top:121.37px;width:1.4px;height:0.6px;background:#b8b8b8;"></div>
<div style="position:absolute;left:11.00px;top:123.26px;width:3.0px;height:0.6px;background:#b8b8b8;"></div>
<div style="position:absolute;left:12.60px;top:125.15px;width:1.4px;height:0.6px;background:#b8b8b8;"></div>
<div style="position:absolute;left:12.60px;top:127.03px;width:1.4px;height:0.6px;background:#b8b8b8;"></div>
<div style="position:absolute;left:12.60px;top:128.92px;width:1.4px;height:0.6px;background:#b8b8b8;"></div>
<div style="position:absolute;left:12.60px;top:130.80px;width:1.4px;height:0.6px;background:#b8b8b8;"></div>
<div style="position:absolute;left:11.80px;top:132.69px;width:2.2px;height:0.6px;background:#b8b8b8;"></div>
<div style="position:absolute;left:12.60px;top:134.58px;width:1.4px;height:0.6px;background:#b8b8b8;"></div>
<div style="position:absolute;left:12.60px;top:136.46px;width:1.4px;height:0.6px;background:#b8b8b8;"></div>
<div style="position:absolute;left:12.60px;top:138.35px;width:1.4px;height:0.6px;background:#b8b8b8;"></div>
<div style="position:absolute;left:12.60px;top:140.23px;width:1.4px;height:0.6px;background:#b8b8b8;"></div>
<div style="position:absolute;left:11.00px;top:142.12px;width:3.0px;height:0.6px;background:#b8b8b8;"></div>
<div style="position:absolute;left:12.60px;top:144.01px;width:1.4px;height:0.6px;background:#b8b8b8;"></div>
<div style="position:absolute;left:12.60px;top:145.89px;width:1.4px;height:0.6px;background:#b8b8b8;"></div>
<div style="position:absolute;left:12.60px;top:147.78px;width:1.4px;height:0.6px;background:#b8b8b8;"></div>
<div style="position:absolute;left:12.60px;top:149.66px;width:1.4px;height:0.6px;background:#b8b8b8;"></div>
<div style="position:absolute;left:11.80px;top:151.55px;width:2.2px;height:0.6px;background:#b8b8b8;"></div>
<div style="position:absolute;left:12.60px;top:153.44px;width:1.4px;height:0.6px;background:#b8b8b8;"></div>
<div style="position:absolute;left:12.60px;top:155.32px;width:1.4px;height:0.6px;background:#b8b8b8;"></div>
<div style="position:absolute;left:12.60px;top:157.21px;width:1.4px;height:0.6px;background:#b8b8b8;"></div>
<div style="position:absolute;left:12.60px;top:159.09px;width:1.4px;height:0.6px;background:#b8b8b8;"></div>
<div style="position:absolute;left:11.00px;top:160.98px;width:3.0px;height:0.6px;background:#b8b8b8;"></div>
<div style="position:absolute;left:12.60px;top:162.87px;width:1.4px;height:0.6px;background:#b8b8b8;"></div>
<div style="position:absolute;left:12.60px;top:164.75px;width:1.4px;height:0.6px;background:#b8b8b8;"></div>
<div style="position:absolute;left:12.60px;top:166.64px;width:1.4px;height:0.6px;background:#b8b8b8;"></div>
<div style="position:absolute;left:12.60px;top:168.52px;width:1.4px;height:0.6px;background:#b8b8b8;"></div>
<div style="position:absolute;left:11.80px;top:170.41px;width:2.2px;height:0.6px;background:#b8b8b8;"></div>
<div style="position:absolute;left:12.60px;top:172.30px;width:1.4px;height:0.6px;background:#b8b8b8;"></div>
<div style="position:absolute;left:12.60px;top:174.18px;width:1.4px;height:0.6px;background:#b8b8b8;"></div>
<div style="position:absolute;left:12.60px;top:176.07px;width:1.4px;height:0.6px;background:#b8b8b8;"></div>
<div style="position:absolute;left:12.60px;top:177.95px;width:1.4px;height:0.6px;background:#b8b8b8;"></div>
<div style="position:absolute;left:11.00px;top:179.84px;width:3.0px;height:0.6px;background:#b8b8b8;"></div>
<div style="position:absolute;left:12.60px;top:181.73px;width:1.4px;height:0.6px;background:#b8b8b8;"></div>
<div style="position:absolute;left:12.60px;top:183.61px;width:1.4px;height:0.6px;background:#b8b8b8;"></div>
<div style="position:absolute;left:12.60px;top:185.50px;width:1.4px;height:0.6px;background:#b8b8b8;"></div>
<div style="position:absolute;left:12.60px;top:187.38px;width:1.4px;height:0.6px;background:#b8b8b8;"></div>
<div style="position:absolute;left:11.80px;top:189.27px;width:2.2px;height:0.6px;background:#b8b8b8;"></div>
<div style="position:absolute;left:12.60px;top:191.16px;width:1.4px;height:0.6px;background:#b8b8b8;"></div>
<div style="position:absolute;left:12.60px;top:193.04px;width:1.4px;height:0.6px;background:#b8b8b8;"></div>
<div style="position:absolute;left:12.60px;top:194.93px;width:1.4px;height:0.6px;background:#b8b8b8;"></div>
<div style="position:absolute;left:12.60px;top:196.81px;width:1.4px;height:0.6px;background:#b8b8b8;"></div>
<div style="position:absolute;left:11.00px;top:198.70px;width:3.0px;height:0.6px;background:#b8b8b8;"></div>
<div style="position:absolute;left:12.60px;top:200.59px;width:1.4px;height:0.6px;background:#b8b8b8;"></div>
<div style="position:absolute;left:12.60px;top:202.47px;width:1.4px;height:0.6px;background:#b8b8b8;"></div>
<div style="position:absolute;left:12.60px;top:204.36px;width:1.4px;height:0.6px;background:#b8b8b8;"></div>
<div style="position:absolute;left:12.60px;top:206.24px;width:1.4px;height:0.6px;background:#b8b8b8;"></div>
<div style="position:absolute;left:11.80px;top:208.13px;width:2.2px;height:0.6px;background:#b8b8b8;"></div>
<div style="position:absolute;left:12.60px;top:210.02px;width:1.4px;height:0.6px;background:#b8b8b8;"></div>
<div style="position:absolute;left:12.60px;top:211.90px;width:1.4px;height:0.6px;background:#b8b8b8;"></div>
<div style="position:absolute;left:12.60px;top:213.79px;width:1.4px;height:0.6px;background:#b8b8b8;"></div>
<div style="position:absolute;left:12.60px;top:215.67px;width:1.4px;height:0.6px;background:#b8b8b8;"></div>
<div style="position:absolute;left:11.00px;top:217.56px;width:3.0px;height:0.6px;background:#b8b8b8;"></div>
<div style="position:absolute;left:12.60px;top:219.45px;width:1.4px;height:0.6px;background:#b8b8b8;"></div>
<div style="position:absolute;left:12.60px;top:221.33px;width:1.4px;height:0.6px;background:#b8b8b8;"></div>
<div style="position:absolute;left:12.60px;top:223.22px;width:1.4px;height:0.6px;background:#b8b8b8;"></div>
<div style="position:absolute;left:12.60px;top:225.10px;width:1.4px;height:0.6px;background:#b8b8b8;"></div>
<div style="position:absolute;left:11.80px;top:226.99px;width:2.2px;height:0.6px;background:#b8b8b8;"></div>
<div style="position:absolute;left:12.60px;top:228.88px;width:1.4px;height:0.6px;background:#b8b8b8;"></div>
<div style="position:absolute;left:12.60px;top:230.76px;width:1.4px;height:0.6px;background:#b8b8b8;"></div>
<div style="position:absolute;left:12.60px;top:232.65px;width:1.4px;height:0.6px;background:#b8b8b8;"></div>
<div style="position:absolute;left:12.60px;top:234.53px;width:1.4px;height:0.6px;background:#b8b8b8;"></div>
<div style="position:absolute;left:11.00px;top:236.42px;width:3.0px;height:0.6px;background:#b8b8b8;"></div>
<div style="position:absolute;left:12.60px;top:238.31px;width:1.4px;height:0.6px;background:#b8b8b8;"></div>
<div style="position:absolute;left:12.60px;top:240.19px;width:1.4px;height:0.6px;background:#b8b8b8;"></div>
<div style="position:absolute;left:12.60px;top:242.08px;width:1.4px;height:0.6px;background:#b8b8b8;"></div>
<div style="position:absolute;left:12.60px;top:243.96px;width:1.4px;height:0.6px;background:#b8b8b8;"></div>
<div style="position:absolute;left:11.80px;top:245.85px;width:2.2px;height:0.6px;background:#b8b8b8;"></div>
<div style="position:absolute;left:12.60px;top:247.74px;width:1.4px;height:0.6px;background:#b8b8b8;"></div>
<div style="position:absolute;left:12.60px;top:249.62px;width:1.4px;height:0.6px;background:#b8b8b8;"></div>
<div style="position:absolute;left:12.60px;top:251.51px;width:1.4px;height:0.6px;background:#b8b8b8;"></div>
<div style="position:absolute;left:12.60px;top:253.39px;width:1.4px;height:0.6px;background:#b8b8b8;"></div>
<div class="t" style="left:-49.450px;width:400.0px;text-align:center;top:103px;font-size:12.0px;color:#707070;font-weight:normal;transform:scale(0.2762,0.3250) translateZ(0);transform-origin:0 0;-webkit-text-stroke:0.38px #707070;">0</div>
<div class="t" style="left:-49.450px;width:400.0px;text-align:center;top:122px;font-size:12.0px;color:#707070;font-weight:normal;transform:scale(0.2762,0.3250) translateZ(0);transform-origin:0 0;-webkit-text-stroke:0.38px #707070;">1</div>
<div class="t" style="left:-49.450px;width:400.0px;text-align:center;top:140px;font-size:12.0px;color:#707070;font-weight:normal;transform:scale(0.2762,0.3250) translateZ(0);transform-origin:0 0;-webkit-text-stroke:0.38px #707070;">2</div>
<div class="t" style="left:-49.450px;width:400.0px;text-align:center;top:159px;font-size:12.0px;color:#707070;font-weight:normal;transform:scale(0.2762,0.3250) translateZ(0);transform-origin:0 0;-webkit-text-stroke:0.38px #707070;">3</div>
<div class="t" style="left:-49.450px;width:400.0px;text-align:center;top:178px;font-size:12.0px;color:#707070;font-weight:normal;transform:scale(0.2762,0.3250) translateZ(0);transform-origin:0 0;-webkit-text-stroke:0.38px #707070;">4</div>
<div class="t" style="left:-49.450px;width:400.0px;text-align:center;top:197px;font-size:12.0px;color:#707070;font-weight:normal;transform:scale(0.2762,0.3250) translateZ(0);transform-origin:0 0;-webkit-text-stroke:0.38px #707070;">5</div>
<div class="t" style="left:-49.450px;width:400.0px;text-align:center;top:216px;font-size:12.0px;color:#707070;font-weight:normal;transform:scale(0.2762,0.3250) translateZ(0);transform-origin:0 0;-webkit-text-stroke:0.38px #707070;">6</div>
<div class="t" style="left:-49.450px;width:400.0px;text-align:center;top:235px;font-size:12.0px;color:#707070;font-weight:normal;transform:scale(0.2762,0.3250) translateZ(0);transform-origin:0 0;-webkit-text-stroke:0.38px #707070;">7</div>
<div class="t" style="left:-49.450px;width:400.0px;text-align:center;top:254px;font-size:12.0px;color:#707070;font-weight:normal;transform:scale(0.2762,0.3250) translateZ(0);transform-origin:0 0;-webkit-text-stroke:0.38px #707070;">8</div>
<div style="position:absolute;left:1.9px;top:275.0px;width:333.6px;height:0.9px;background:#bdbdbd;"></div>
<div style="position:absolute;left:1.9px;top:275.9px;width:333.6px;height:10.300000000000011px;background:linear-gradient(#fafafa,#efefef);"></div>
<div style="position:absolute;left:1.9px;top:285.4px;width:333.6px;height:0.8px;background:#c8c8c8;"></div>
<svg style="position:absolute;left:4.6px;top:280.50px" width="5" height="2.6"><path d="M0.3 0.3h4.2L2.4 2.3z" fill="#ecd97c" stroke="#b8a868" stroke-width="0.4"/></svg>
<div class="t" style="left:10.8px;top:279px;font-size:12.0px;color:#1a1a1a;font-weight:normal;transform:scale(0.3563,0.4167) translateZ(0);transform-origin:0 0;-webkit-text-stroke:0.38px #1a1a1a;">Detalle [DetalleFacturas]</div>
<div style="position:absolute;left:1.9px;top:286.2px;width:12px;height:15.0px;background:#f0f0f0;"></div>
<div style="position:absolute;left:1.9px;top:286.2px;width:1.1px;height:15.0px;background:#e2e2e2;"></div>
<div style="position:absolute;left:14px;top:286.2px;width:321.5px;height:15.0px;background-color:#fff;background-image:radial-gradient(circle at 1.2px 1.2px,#e3e3e3 0.3px,rgba(240,240,240,0) 0.72px);background-size:2.41px 2.41px;"></div>
<div style="position:absolute;left:11.00px;top:286.20px;width:3.0px;height:0.6px;background:#b8b8b8;"></div>
<div style="position:absolute;left:12.60px;top:288.09px;width:1.4px;height:0.6px;background:#b8b8b8;"></div>
<div style="position:absolute;left:12.60px;top:289.97px;width:1.4px;height:0.6px;background:#b8b8b8;"></div>
<div style="position:absolute;left:12.60px;top:291.86px;width:1.4px;height:0.6px;background:#b8b8b8;"></div>
<div style="position:absolute;left:12.60px;top:293.74px;width:1.4px;height:0.6px;background:#b8b8b8;"></div>
<div style="position:absolute;left:11.80px;top:295.63px;width:2.2px;height:0.6px;background:#b8b8b8;"></div>
<div style="position:absolute;left:12.60px;top:297.52px;width:1.4px;height:0.6px;background:#b8b8b8;"></div>
<div style="position:absolute;left:12.60px;top:299.40px;width:1.4px;height:0.6px;background:#b8b8b8;"></div>
<div style="position:absolute;left:1.9px;top:301.0px;width:333.6px;height:0.9px;background:#bdbdbd;"></div>
<div style="position:absolute;left:1.9px;top:301.9px;width:333.6px;height:12.600000000000023px;background:linear-gradient(#fafafa,#efefef);"></div>
<div style="position:absolute;left:1.9px;top:313.7px;width:333.6px;height:0.8px;background:#c8c8c8;"></div>
<svg style="position:absolute;left:4.6px;top:308.90px" width="5" height="2.6"><path d="M0.3 0.3h4.2L2.4 2.3z" fill="#ecd97c" stroke="#b8a868" stroke-width="0.4"/></svg>
<div class="t" style="left:10.8px;top:307px;font-size:12.0px;color:#1a1a1a;font-weight:normal;transform:scale(0.3563,0.4167) translateZ(0);transform-origin:0 0;-webkit-text-stroke:0.38px #1a1a1a;">Pie de agrupamiento [DetalleFacturas.Cliente]</div>
<div style="position:absolute;left:1.9px;top:314.5px;width:12px;height:41.69999999999999px;background:#f0f0f0;"></div>
<div style="position:absolute;left:1.9px;top:314.5px;width:1.1px;height:41.69999999999999px;background:#e2e2e2;"></div>
<div style="position:absolute;left:14px;top:314.5px;width:321.5px;height:41.69999999999999px;background-color:#fff;background-image:radial-gradient(circle at 1.2px 1.2px,#e3e3e3 0.3px,rgba(240,240,240,0) 0.72px);background-size:2.41px 2.41px;"></div>
<div style="position:absolute;left:11.00px;top:314.50px;width:3.0px;height:0.6px;background:#b8b8b8;"></div>
<div style="position:absolute;left:12.60px;top:316.39px;width:1.4px;height:0.6px;background:#b8b8b8;"></div>
<div style="position:absolute;left:12.60px;top:318.27px;width:1.4px;height:0.6px;background:#b8b8b8;"></div>
<div style="position:absolute;left:12.60px;top:320.16px;width:1.4px;height:0.6px;background:#b8b8b8;"></div>
<div style="position:absolute;left:12.60px;top:322.04px;width:1.4px;height:0.6px;background:#b8b8b8;"></div>
<div style="position:absolute;left:11.80px;top:323.93px;width:2.2px;height:0.6px;background:#b8b8b8;"></div>
<div style="position:absolute;left:12.60px;top:325.82px;width:1.4px;height:0.6px;background:#b8b8b8;"></div>
<div style="position:absolute;left:12.60px;top:327.70px;width:1.4px;height:0.6px;background:#b8b8b8;"></div>
<div style="position:absolute;left:12.60px;top:329.59px;width:1.4px;height:0.6px;background:#b8b8b8;"></div>
<div style="position:absolute;left:12.60px;top:331.47px;width:1.4px;height:0.6px;background:#b8b8b8;"></div>
<div style="position:absolute;left:11.00px;top:333.36px;width:3.0px;height:0.6px;background:#b8b8b8;"></div>
<div style="position:absolute;left:12.60px;top:335.25px;width:1.4px;height:0.6px;background:#b8b8b8;"></div>
<div style="position:absolute;left:12.60px;top:337.13px;width:1.4px;height:0.6px;background:#b8b8b8;"></div>
<div style="position:absolute;left:12.60px;top:339.02px;width:1.4px;height:0.6px;background:#b8b8b8;"></div>
<div style="position:absolute;left:12.60px;top:340.90px;width:1.4px;height:0.6px;background:#b8b8b8;"></div>
<div style="position:absolute;left:11.80px;top:342.79px;width:2.2px;height:0.6px;background:#b8b8b8;"></div>
<div style="position:absolute;left:12.60px;top:344.68px;width:1.4px;height:0.6px;background:#b8b8b8;"></div>
<div style="position:absolute;left:12.60px;top:346.56px;width:1.4px;height:0.6px;background:#b8b8b8;"></div>
<div style="position:absolute;left:12.60px;top:348.45px;width:1.4px;height:0.6px;background:#b8b8b8;"></div>
<div style="position:absolute;left:12.60px;top:350.33px;width:1.4px;height:0.6px;background:#b8b8b8;"></div>
<div style="position:absolute;left:11.00px;top:352.22px;width:3.0px;height:0.6px;background:#b8b8b8;"></div>
<div style="position:absolute;left:12.60px;top:354.11px;width:1.4px;height:0.6px;background:#b8b8b8;"></div>
<div class="t" style="left:-49.450px;width:400.0px;text-align:center;top:313px;font-size:12.0px;color:#707070;font-weight:normal;transform:scale(0.2762,0.3250) translateZ(0);transform-origin:0 0;-webkit-text-stroke:0.38px #707070;">0</div>
<div class="t" style="left:-49.450px;width:400.0px;text-align:center;top:332px;font-size:12.0px;color:#707070;font-weight:normal;transform:scale(0.2762,0.3250) translateZ(0);transform-origin:0 0;-webkit-text-stroke:0.38px #707070;">1</div>
<div class="t" style="left:-49.450px;width:400.0px;text-align:center;top:351px;font-size:12.0px;color:#707070;font-weight:normal;transform:scale(0.2762,0.3250) translateZ(0);transform-origin:0 0;-webkit-text-stroke:0.38px #707070;">2</div>
<div style="position:absolute;left:1.9px;top:356.0px;width:333.6px;height:0.9px;background:#bdbdbd;"></div>
<div style="position:absolute;left:1.9px;top:356.9px;width:333.6px;height:10.100000000000023px;background:linear-gradient(#fafafa,#efefef);"></div>
<div style="position:absolute;left:1.9px;top:366.2px;width:333.6px;height:0.8px;background:#c8c8c8;"></div>
<svg style="position:absolute;left:4.6px;top:361.60px" width="5" height="2.6"><path d="M0.3 0.3h4.2L2.4 2.3z" fill="#ecd97c" stroke="#b8a868" stroke-width="0.4"/></svg>
<div class="t" style="left:10.8px;top:360px;font-size:12.0px;color:#1a1a1a;font-weight:normal;transform:scale(0.3563,0.4167) translateZ(0);transform-origin:0 0;-webkit-text-stroke:0.38px #1a1a1a;">Pie de página</div>
<div style="position:absolute;left:1.9px;top:367.0px;width:12px;height:19.19999999999999px;background:#f0f0f0;"></div>
<div style="position:absolute;left:1.9px;top:367.0px;width:1.1px;height:19.19999999999999px;background:#e2e2e2;"></div>
<div style="position:absolute;left:14px;top:367.0px;width:321.5px;height:19.19999999999999px;background-color:#fff;background-image:radial-gradient(circle at 1.2px 1.2px,#e3e3e3 0.3px,rgba(240,240,240,0) 0.72px);background-size:2.41px 2.41px;"></div>
<div style="position:absolute;left:11.00px;top:367.00px;width:3.0px;height:0.6px;background:#b8b8b8;"></div>
<div style="position:absolute;left:12.60px;top:368.89px;width:1.4px;height:0.6px;background:#b8b8b8;"></div>
<div style="position:absolute;left:12.60px;top:370.77px;width:1.4px;height:0.6px;background:#b8b8b8;"></div>
<div style="position:absolute;left:12.60px;top:372.66px;width:1.4px;height:0.6px;background:#b8b8b8;"></div>
<div style="position:absolute;left:12.60px;top:374.54px;width:1.4px;height:0.6px;background:#b8b8b8;"></div>
<div style="position:absolute;left:11.80px;top:376.43px;width:2.2px;height:0.6px;background:#b8b8b8;"></div>
<div style="position:absolute;left:12.60px;top:378.32px;width:1.4px;height:0.6px;background:#b8b8b8;"></div>
<div style="position:absolute;left:12.60px;top:380.20px;width:1.4px;height:0.6px;background:#b8b8b8;"></div>
<div style="position:absolute;left:12.60px;top:382.09px;width:1.4px;height:0.6px;background:#b8b8b8;"></div>
<div style="position:absolute;left:12.60px;top:383.97px;width:1.4px;height:0.6px;background:#b8b8b8;"></div>
<div style="position:absolute;left:1.9px;top:386.0px;width:333.6px;height:0.8px;background:#c0c0c0;"></div>
<div style="position:absolute;left:1.9px;top:386.8px;width:333.6px;height:2.0px;background:#ececec;"></div>
<div style="position:absolute;left:335.5px;top:75px;width:1px;height:314px;background:#9a9a9a;"></div>
<div style="position:absolute;left:189.1px;top:104.9px;width:67.5px;height:10.5px;border:0.8px solid #f3c4c4;"></div>
<div style="position:absolute;left:189.1px;top:104.9px;width:66.9px;height:10.5px;overflow:hidden;">
<div class="t" style="left:0.9px;top:3px;font-size:12.0px;color:#747474;font-weight:normal;transform:scale(0.4292,0.4292) translateZ(0);transform-origin:0 0;-webkit-text-stroke:0.38px #747474;">Página ' + $V[pageno] + ' de</div>
</div>
<div style="position:absolute;left:274.1px;top:104.9px;width:61.4px;height:10.5px;border:0.8px solid #f3c4c4;"></div>
<div style="position:absolute;left:274.1px;top:104.9px;width:60.8px;height:10.5px;overflow:hidden;">
<div class="t" style="left:-106.267px;width:400.0px;text-align:right;top:3px;font-size:12.0px;color:#747474;font-weight:normal;transform:scale(0.4167,0.4167) translateZ(0);transform-origin:0 0;-webkit-text-stroke:0.38px #747474;">currentDate()</div>
</div>
<div style="position:absolute;left:188px;top:115.8px;width:147.5px;height:1.0px;background:#8a8a8a;"></div>
<div style="position:absolute;left:46.3px;top:155.3px;width:104px;height:53.4px;background:#fff;"></div>
<svg style="position:absolute;left:77px;top:155.5px" width="46" height="27" viewBox="0 0 46 27">
<path d="M27 1 H11.5 A10 10 0 0 0 1.5 11 V16 A10 10 0 0 0 11.5 26 H23 V21.1 H12 A4.1 4.1 0 0 1 7.9 17 V14.3 H21 V11.5 H7.9 V9.9 A4.1 4.1 0 0 1 12 5.8 H27 Z" fill="#c24fd6"/>
<path fill-rule="evenodd" d="M34.5 26 H29.1 A9.5 9.5 0 0 1 19.6 16.5 V10.5 A9.5 9.5 0 0 1 29.1 1 H33.9 A9.5 9.5 0 0 1 43.4 10.5 V15.9 H24.5 V16.5 A4.6 4.6 0 0 0 29.1 21.1 H34.5 Z M29.6 5.8 A4.7 4.7 0 0 0 24.5 10.5 V11.5 H38.6 V10.5 A4.7 4.7 0 0 0 33.9 5.8 Z" fill="#2e6d4b"/>
<path d="M19.7 11.5 H21 V14.3 H20 Z M20.3 18.5 A9.5 9.5 0 0 0 23 21.1 V21.1 H21.5 Z" fill="#1d6656"/>
</svg>
<div class="t" style="left:47.3px;top:181.3px;font-size:19.4px;line-height:1.2;font-weight:bold;color:#2e6d4b;letter-spacing:0.95px;-webkit-text-stroke:0.7px #2e6d4b;">COMPANY</div>
<div class="t" style="left:77.3px;top:202.5px;font-size:4.9px;font-weight:bold;color:#c24fd6;letter-spacing:3.65px;-webkit-text-stroke:0.15px #c24fd6;">SLOGAN</div>
<div style="position:absolute;left:187.9px;top:167.2px;width:51.2px;height:7.6px;border:0.8px solid #e8e8e8;"></div>
<div style="position:absolute;left:187.9px;top:167.2px;width:50.6px;height:7.6px;overflow:hidden;">
<div class="t" style="left:0.9px;top:1px;font-size:12.0px;color:#1a1a1a;font-weight:bold;transform:scale(0.4250,0.4250) translateZ(0);transform-origin:0 0;-webkit-text-stroke:0.38px #1a1a1a;">Dirección postal:</div>
</div>
<div style="position:absolute;left:188px;top:176.5px;width:147.5px;height:1.1px;background:#9c9c9c;"></div>
<div style="position:absolute;left:188.2px;top:180.2px;width:39.4px;height:27px;border:0.9px solid #5a5a5a;border-radius:0.9px;background:repeating-linear-gradient(135deg,#fff 0,#fff 1.25px,#d4d4d4 1.25px,#d4d4d4 1.8px);"></div>
<div style="position:absolute;left:189px;top:189px;width:37.8px;height:8px;overflow:hidden;">
<div class="t" style="left:-49.700px;width:400.0px;text-align:center;top:2px;font-size:12.0px;color:#111;font-weight:normal;transform:scale(0.3430,0.4083) translateZ(0);transform-origin:0 0;-webkit-text-stroke:0.38px #111;">MAGE (#CLIENTES.FOTO</div>
</div>
<div style="position:absolute;left:232.8px;top:180.2px;width:72.8px;height:9.3px;border:0.8px solid #f3c4c4;"></div>
<div style="position:absolute;left:232.8px;top:180.2px;width:72.2px;height:9.3px;overflow:hidden;">
<div class="t" style="left:0.9px;top:1px;font-size:12.0px;color:#747474;font-weight:normal;transform:scale(0.4208,0.4208) translateZ(0);transform-origin:0 0;-webkit-text-stroke:0.38px #747474;">#CLIENTES.NAME</div>
</div>
<div style="position:absolute;left:232.8px;top:189.2px;width:72.8px;height:9.0px;border:0.8px solid #f3c4c4;"></div>
<div style="position:absolute;left:232.8px;top:189.2px;width:72.2px;height:9.0px;overflow:hidden;">
<div class="t" style="left:0.9px;top:0px;font-size:12.0px;color:#747474;font-weight:normal;transform:scale(0.4208,0.4208) translateZ(0);transform-origin:0 0;-webkit-text-stroke:0.38px #747474;">#CLIENTES.CIF</div>
</div>
<div style="position:absolute;left:232.8px;top:198.0px;width:72.8px;height:8.7px;border:0.8px solid #f3c4c4;"></div>
<div style="position:absolute;left:232.8px;top:198.0px;width:72.2px;height:8.7px;overflow:hidden;">
<div class="t" style="left:0.9px;top:0px;font-size:12.0px;color:#747474;font-weight:normal;transform:scale(0.4208,0.4208) translateZ(0);transform-origin:0 0;-webkit-text-stroke:0.38px #747474;">#CLIENTES.DIR</div>
</div>
<svg style="position:absolute;left:307.8px;top:179.8px" width="27.6" height="26.8" viewBox="0 0 27.6 26.8"><rect x="0.8" y="0.8" width="6.9" height="6.9" rx="1" fill="none" stroke="#6a6a6a" stroke-width="1.5"/><rect x="2.7" y="2.7" width="3.1" height="3.1" fill="#555"/><rect x="19.8" y="0.8" width="6.9" height="6.9" rx="1" fill="none" stroke="#6a6a6a" stroke-width="1.5"/><rect x="21.7" y="2.7" width="3.1" height="3.1" fill="#555"/><rect x="0.8" y="19.0" width="6.9" height="6.9" rx="1" fill="none" stroke="#6a6a6a" stroke-width="1.5"/><rect x="2.7" y="20.9" width="3.1" height="3.1" fill="#555"/><rect x="1.95" y="13.30" width="1.95" height="1.9" fill="#666"/><rect x="3.90" y="15.20" width="1.95" height="1.9" fill="#666"/><rect x="5.85" y="11.40" width="1.95" height="1.9" fill="#666"/><rect x="7.80" y="9.50" width="1.95" height="1.9" fill="#666"/><rect x="7.80" y="11.40" width="1.95" height="1.9" fill="#666"/><rect x="7.80" y="13.30" width="1.95" height="1.9" fill="#666"/><rect x="9.75" y="1.90" width="1.95" height="1.9" fill="#666"/><rect x="9.75" y="5.70" width="1.95" height="1.9" fill="#666"/><rect x="9.75" y="9.50" width="1.95" height="1.9" fill="#666"/><rect x="9.75" y="11.40" width="1.95" height="1.9" fill="#666"/><rect x="9.75" y="15.20" width="1.95" height="1.9" fill="#666"/><rect x="9.75" y="17.10" width="1.95" height="1.9" fill="#666"/><rect x="9.75" y="22.80" width="1.95" height="1.9" fill="#666"/><rect x="11.70" y="3.80" width="1.95" height="1.9" fill="#666"/><rect x="11.70" y="13.30" width="1.95" height="1.9" fill="#666"/><rect x="11.70" y="15.20" width="1.95" height="1.9" fill="#666"/><rect x="11.70" y="17.10" width="1.95" height="1.9" fill="#666"/><rect x="11.70" y="19.00" width="1.95" height="1.9" fill="#666"/><rect x="11.70" y="20.90" width="1.95" height="1.9" fill="#666"/><rect x="11.70" y="22.80" width="1.95" height="1.9" fill="#666"/><rect x="13.65" y="0.00" width="1.95" height="1.9" fill="#666"/><rect x="13.65" y="3.80" width="1.95" height="1.9" fill="#666"/><rect x="13.65" y="5.70" width="1.95" height="1.9" fill="#666"/><rect x="13.65" y="11.40" width="1.95" height="1.9" fill="#666"/><rect x="13.65" y="17.10" width="1.95" height="1.9" fill="#666"/><rect x="13.65" y="20.90" width="1.95" height="1.9" fill="#666"/><rect x="15.60" y="0.00" width="1.95" height="1.9" fill="#666"/><rect x="15.60" y="3.80" width="1.95" height="1.9" fill="#666"/><rect x="15.60" y="7.60" width="1.95" height="1.9" fill="#666"/><rect x="15.60" y="9.50" width="1.95" height="1.9" fill="#666"/><rect x="15.60" y="11.40" width="1.95" height="1.9" fill="#666"/><rect x="15.60" y="15.20" width="1.95" height="1.9" fill="#666"/><rect x="15.60" y="22.80" width="1.95" height="1.9" fill="#666"/><rect x="15.60" y="24.70" width="1.95" height="1.9" fill="#666"/><rect x="17.55" y="13.30" width="1.95" height="1.9" fill="#666"/><rect x="17.55" y="20.90" width="1.95" height="1.9" fill="#666"/><rect x="17.55" y="24.70" width="1.95" height="1.9" fill="#666"/><rect x="19.50" y="9.50" width="1.95" height="1.9" fill="#666"/><rect x="19.50" y="15.20" width="1.95" height="1.9" fill="#666"/><rect x="19.50" y="20.90" width="1.95" height="1.9" fill="#666"/><rect x="19.50" y="22.80" width="1.95" height="1.9" fill="#666"/><rect x="19.50" y="24.70" width="1.95" height="1.9" fill="#666"/><rect x="21.45" y="9.50" width="1.95" height="1.9" fill="#666"/><rect x="21.45" y="11.40" width="1.95" height="1.9" fill="#666"/><rect x="21.45" y="17.10" width="1.95" height="1.9" fill="#666"/><rect x="21.45" y="19.00" width="1.95" height="1.9" fill="#666"/><rect x="21.45" y="24.70" width="1.95" height="1.9" fill="#666"/><rect x="23.40" y="9.50" width="1.95" height="1.9" fill="#666"/><rect x="23.40" y="19.00" width="1.95" height="1.9" fill="#666"/><rect x="23.40" y="22.80" width="1.95" height="1.9" fill="#666"/><rect x="25.35" y="11.40" width="1.95" height="1.9" fill="#666"/><rect x="25.35" y="20.90" width="1.95" height="1.9" fill="#666"/><rect x="25.35" y="24.70" width="1.95" height="1.9" fill="#666"/></svg>
<div style="position:absolute;left:14.1px;top:246.8px;width:85.1px;height:10.5px;border:0.8px solid #e8e8e8;"></div>
<div style="position:absolute;left:14.1px;top:246.8px;width:84.5px;height:10.5px;overflow:hidden;">
<div class="t" style="left:0.9px;top:3px;font-size:12.0px;color:#1a1a1a;font-weight:bold;transform:scale(0.4417,0.4417) translateZ(0);transform-origin:0 0;-webkit-text-stroke:0.38px #1a1a1a;">Relación de facturas</div>
</div>
<div style="position:absolute;left:14px;top:256.9px;width:321.5px;height:1.0px;background:#a0a0a0;"></div>
<div style="position:absolute;left:14.1px;top:259.9px;width:39.5px;height:13.2px;border:0.8px solid #ececec;"></div>
<div style="position:absolute;left:14.1px;top:259.9px;width:38.9px;height:13.2px;overflow:hidden;">
<div class="t" style="left:-138.167px;width:400.0px;text-align:right;top:4px;font-size:12.0px;color:#7a7a7a;font-weight:normal;transform:scale(0.4417,0.4417) translateZ(0);transform-origin:0 0;-webkit-text-stroke:0.38px #7a7a7a;">N°</div>
</div>
<div style="position:absolute;left:56.3px;top:259.9px;width:45px;height:13.2px;border:0.8px solid #ececec;"></div>
<div style="position:absolute;left:56.3px;top:259.9px;width:44.4px;height:13.2px;overflow:hidden;">
<div class="t" style="left:-139.333px;width:400.0px;text-align:right;top:4px;font-size:12.0px;color:#7a7a7a;font-weight:normal;transform:scale(0.4583,0.4583) translateZ(0);transform-origin:0 0;-webkit-text-stroke:0.38px #7a7a7a;">Fecha</div>
</div>
<div style="position:absolute;left:290.5px;top:259.9px;width:45px;height:13.2px;border:0.8px solid #ececec;"></div>
<div style="position:absolute;left:290.5px;top:259.9px;width:44.4px;height:13.2px;overflow:hidden;">
<div class="t" style="left:-139.333px;width:400.0px;text-align:right;top:4px;font-size:12.0px;color:#7a7a7a;font-weight:normal;transform:scale(0.4583,0.4583) translateZ(0);transform-origin:0 0;-webkit-text-stroke:0.38px #7a7a7a;">Importe</div>
</div>
<div style="position:absolute;left:14px;top:273.0px;width:39.6px;height:1.0px;background:#9c9c9c;"></div>
<div style="position:absolute;left:56.3px;top:273.0px;width:45px;height:1.0px;background:#9c9c9c;"></div>
<div style="position:absolute;left:104px;top:273.0px;width:185.8px;height:1.0px;background:#9c9c9c;"></div>
<div style="position:absolute;left:290.5px;top:273.0px;width:45px;height:1.0px;background:#9c9c9c;"></div>
<div style="position:absolute;left:14.1px;top:289px;width:39.5px;height:9.6px;border:0.8px solid #f3c4c4;"></div>
<div style="position:absolute;left:14.1px;top:289px;width:38.9px;height:9.6px;overflow:hidden;">
<div class="t" style="left:0.9px;top:1px;font-size:12.0px;color:#747474;font-weight:normal;transform:scale(0.4167,0.4167) translateZ(0);transform-origin:0 0;-webkit-text-stroke:0.38px #747474;">fied( #ID, 4, "0" )</div>
</div>
<div style="position:absolute;left:56.3px;top:289px;width:45px;height:9.6px;border:0.8px solid #f3c4c4;"></div>
<div style="position:absolute;left:56.3px;top:289px;width:44.4px;height:9.6px;overflow:hidden;">
<div class="t" style="left:-122.667px;width:400.0px;text-align:right;top:1px;font-size:12.0px;color:#747474;font-weight:normal;transform:scale(0.4167,0.4167) translateZ(0);transform-origin:0 0;-webkit-text-stroke:0.38px #747474;">#FCH</div>
</div>
<div style="position:absolute;left:290.5px;top:289px;width:45px;height:9.6px;border:0.8px solid #f3c4c4;"></div>
<div style="position:absolute;left:290.5px;top:289px;width:44.4px;height:9.6px;overflow:hidden;">
<div class="t" style="left:-122.667px;width:400.0px;text-align:right;top:1px;font-size:12.0px;color:#747474;font-weight:normal;transform:scale(0.4167,0.4167) translateZ(0);transform-origin:0 0;-webkit-text-stroke:0.38px #747474;">#IMP</div>
</div>
<div style="position:absolute;left:14px;top:300.6px;width:39.6px;height:1.0px;background:#9c9c9c;"></div>
<div style="position:absolute;left:56.3px;top:300.6px;width:45px;height:1.0px;background:#9c9c9c;"></div>
<div style="position:absolute;left:104px;top:300.6px;width:185.8px;height:1.0px;background:#9c9c9c;"></div>
<div style="position:absolute;left:290.5px;top:300.6px;width:45px;height:1.0px;background:#9c9c9c;"></div>
<div style="position:absolute;left:14.1px;top:317.3px;width:48.5px;height:8.3px;border:0.8px solid #e8e8e8;"></div>
<div style="position:absolute;left:14.1px;top:317.3px;width:47.9px;height:8.3px;overflow:hidden;">
<div class="t" style="left:0.9px;top:1px;font-size:12.0px;color:#1a1a1a;font-weight:bold;transform:scale(0.4292,0.4292) translateZ(0);transform-origin:0 0;-webkit-text-stroke:0.38px #1a1a1a;">Condiciones</div>
</div>
<div style="position:absolute;left:14px;top:326.3px;width:147.5px;height:1.0px;background:#a0a0a0;"></div>
<div style="position:absolute;left:187.9px;top:317.3px;width:48.6px;height:7.7px;border:0.8px solid #e8e8e8;"></div>
<div style="position:absolute;left:187.9px;top:317.3px;width:48.0px;height:7.7px;overflow:hidden;">
<div class="t" style="left:0.9px;top:1px;font-size:12.0px;color:#1a1a1a;font-weight:bold;transform:scale(0.4375,0.4375) translateZ(0);transform-origin:0 0;-webkit-text-stroke:0.38px #1a1a1a;">Resumen</div>
</div>
<div style="position:absolute;left:188px;top:326.3px;width:147.5px;height:1.0px;background:#a0a0a0;"></div>
<div style="position:absolute;left:194.1px;top:332.5px;width:66.6px;height:9.1px;border:0.8px solid #e4e4e4;"></div>
<div style="position:absolute;left:194.1px;top:332.5px;width:66.0px;height:9.1px;overflow:hidden;">
<div class="t" style="left:0.9px;top:0px;font-size:12.0px;color:#8a8a8a;font-weight:normal;transform:scale(0.4667,0.4667) translateZ(0);transform-origin:0 0;-webkit-text-stroke:0.38px #8a8a8a;">Número de líneas</div>
</div>
<div style="position:absolute;left:296px;top:332.5px;width:39.5px;height:9.1px;border:0.8px solid #f3c4c4;"></div>
<div style="position:absolute;left:296px;top:332.5px;width:38.9px;height:9.1px;overflow:hidden;">
<div class="t" style="left:-138.167px;width:400.0px;text-align:right;top:1px;font-size:12.0px;color:#8a8a8a;font-weight:normal;transform:scale(0.4417,0.4417) translateZ(0);transform-origin:0 0;-webkit-text-stroke:0.38px #8a8a8a;">NUM</div>
</div>
<div style="position:absolute;left:287px;top:341.4px;width:48.5px;height:1.0px;background:#8a8a8a;"></div>
<div style="position:absolute;left:194.1px;top:344.3px;width:66.6px;height:9.7px;border:0.8px solid #e4e4e4;"></div>
<div style="position:absolute;left:194.1px;top:344.3px;width:66.0px;height:9.7px;overflow:hidden;">
<div class="t" style="left:0.9px;top:1px;font-size:12.0px;color:#1a1a1a;font-weight:bold;transform:scale(0.4417,0.4417) translateZ(0);transform-origin:0 0;-webkit-text-stroke:0.38px #1a1a1a;">Importe total</div>
</div>
<div style="position:absolute;left:296px;top:344.3px;width:39.5px;height:9.7px;border:0.8px solid #f3c4c4;"></div>
<div style="position:absolute;left:296px;top:344.3px;width:38.9px;height:9.7px;overflow:hidden;">
<div class="t" style="left:0.9px;top:1px;font-size:12.0px;color:#1a1a1a;font-weight:bold;transform:scale(0.4218,0.4417) translateZ(0);transform-origin:0 0;-webkit-text-stroke:0.38px #1a1a1a;">IPORTE_TOTAL</div>
</div>
<div style="position:absolute;left:565px;top:134.9px;width:35.8px;height:8.7px;background:#ffffe1;border:0.8px solid #767676;box-shadow:0.9px 0.9px 0.9px rgba(0,0,0,0.45);"></div>
<div class="t" style="left:566.6px;top:137px;font-size:12.0px;color:#000;font-weight:normal;transform:scale(0.3724,0.3917) translateZ(0);transform-origin:0 0;-webkit-text-stroke:0.38px #000;">Restaurar abajo</div>
<div style="position:absolute;left:662px;top:64px;width:107px;height:359px;background:#f0f0f0;"></div>
<div class="t" style="left:665.3px;top:67px;font-size:12.0px;color:#1a1a1a;font-weight:normal;transform:scale(0.3587,0.3917) translateZ(0);transform-origin:0 0;-webkit-text-stroke:0.38px #1a1a1a;">Editor de geometría</div>
<div style="position:absolute;left:758.2px;top:66.3px;width:5.6px;height:5.6px;border:0.6px solid #b8b8b8;background:#ececec;"></div>
<div style="position:absolute;left:764.2px;top:66.3px;width:5.2px;height:5.6px;border:0.6px solid #b8b8b8;background:#ececec;"></div>
<svg style="position:absolute;left:764.2px;top:66.3px" width="5.2" height="5.6"><path d="M1.2 1.2l2.8 3.2M4 1.2l-2.8 3.2" stroke="#777" stroke-width="0.6"/></svg>
<div style="position:absolute;left:759.5px;top:67.6px;width:3px;height:3px;border:0.5px solid #999;"></div>
<div style="position:absolute;left:758.2px;top:240.8px;width:5.6px;height:5.6px;border:0.6px solid #b8b8b8;background:#ececec;"></div>
<div style="position:absolute;left:764.2px;top:240.8px;width:5.2px;height:5.6px;border:0.6px solid #b8b8b8;background:#ececec;"></div>
<svg style="position:absolute;left:764.2px;top:240.8px" width="5.2" height="5.6"><path d="M1.2 1.2l2.8 3.2M4 1.2l-2.8 3.2" stroke="#777" stroke-width="0.6"/></svg>
<div style="position:absolute;left:759.5px;top:242.10000000000002px;width:3px;height:3px;border:0.5px solid #999;"></div>
<div style="position:absolute;left:664.5px;top:72.6px;width:104px;height:165px;background:#fff;border:0.7px solid #d4d4d4;"></div>
<div style="position:absolute;left:665px;top:73px;width:97px;height:8px;background:linear-gradient(#fdfdfd,#f0f0f0);border-bottom:0.7px solid #dcdcdc;"></div>
<div style="position:absolute;left:762px;top:73px;width:6.3px;height:8px;background:#f0f0f0;"></div>
<div style="position:absolute;left:716.4px;top:73px;width:0.7px;height:8px;background:#dcdcdc;"></div>
<div class="t" style="left:612.367px;width:400.0px;text-align:center;top:74px;font-size:12.0px;color:#1a1a1a;font-weight:normal;transform:scale(0.3917,0.3917) translateZ(0);transform-origin:0 0;-webkit-text-stroke:0.38px #1a1a1a;">Propiedad</div>
<div class="t" style="left:661.167px;width:400.0px;text-align:center;top:74px;font-size:12.0px;color:#1a1a1a;font-weight:normal;transform:scale(0.3917,0.3917) translateZ(0);transform-origin:0 0;-webkit-text-stroke:0.38px #1a1a1a;">Valor</div>
<div style="position:absolute;left:665px;top:81px;width:97px;height:12px;background:#fff;"></div>
<div style="position:absolute;left:716.4px;top:81px;width:0.7px;height:12px;background:#e2e2e2;"></div>
<div class="t" style="left:666.2px;top:84px;font-size:12.0px;color:#1a1a1a;font-weight:normal;transform:scale(0.3917,0.3917) translateZ(0);transform-origin:0 0;-webkit-text-stroke:0.38px #1a1a1a;">Tipo de sección</div>
<div class="t" style="left:718px;top:84px;font-size:12.0px;color:#1a1a1a;font-weight:normal;transform:scale(0.3720,0.3917) translateZ(0);transform-origin:0 0;-webkit-text-stroke:0.38px #1a1a1a;">Pie de página</div>
<div style="position:absolute;left:665px;top:93px;width:97px;height:12px;background:#e8e6e2;"></div>
<div style="position:absolute;left:716.4px;top:93px;width:0.7px;height:12px;background:#e2e2e2;"></div>
<div class="t" style="left:666.2px;top:96px;font-size:12.0px;color:#1a1a1a;font-weight:normal;transform:scale(0.3917,0.3917) translateZ(0);transform-origin:0 0;-webkit-text-stroke:0.38px #1a1a1a;">Alto de sección</div>
<div class="t" style="left:624.467px;width:400.0px;text-align:right;top:96px;font-size:12.0px;color:#1a1a1a;font-weight:normal;transform:scale(0.3368,0.3917) translateZ(0);transform-origin:0 0;-webkit-text-stroke:0.38px #1a1a1a;">10,0000</div>
<div style="position:absolute;left:665px;top:105px;width:97px;height:12px;background:#fff;"></div>
<div style="position:absolute;left:716.4px;top:105px;width:0.7px;height:12px;background:#e2e2e2;"></div>
<div class="t" style="left:666.2px;top:108px;font-size:12.0px;color:#a4a4a4;font-weight:normal;transform:scale(0.3917,0.3917) translateZ(0);transform-origin:0 0;-webkit-text-stroke:0.38px #a4a4a4;">Nombre del objeto</div>
<div style="position:absolute;left:665px;top:117px;width:97px;height:12px;background:#e8e6e2;"></div>
<div style="position:absolute;left:716.4px;top:117px;width:0.7px;height:12px;background:#e2e2e2;"></div>
<div class="t" style="left:666.2px;top:120px;font-size:12.0px;color:#a4a4a4;font-weight:normal;transform:scale(0.3917,0.3917) translateZ(0);transform-origin:0 0;-webkit-text-stroke:0.38px #a4a4a4;">Posición X</div>
<div class="t" style="left:624.467px;width:400.0px;text-align:right;top:120px;font-size:12.0px;color:#a4a4a4;font-weight:normal;transform:scale(0.3368,0.3917) translateZ(0);transform-origin:0 0;-webkit-text-stroke:0.38px #a4a4a4;">0,0000</div>
<div style="position:absolute;left:665px;top:129px;width:97px;height:12px;background:#fff;"></div>
<div style="position:absolute;left:716.4px;top:129px;width:0.7px;height:12px;background:#e2e2e2;"></div>
<div class="t" style="left:666.2px;top:132px;font-size:12.0px;color:#a4a4a4;font-weight:normal;transform:scale(0.3917,0.3917) translateZ(0);transform-origin:0 0;-webkit-text-stroke:0.38px #a4a4a4;">Posición Y</div>
<div class="t" style="left:624.467px;width:400.0px;text-align:right;top:132px;font-size:12.0px;color:#a4a4a4;font-weight:normal;transform:scale(0.3368,0.3917) translateZ(0);transform-origin:0 0;-webkit-text-stroke:0.38px #a4a4a4;">0,0000</div>
<div style="position:absolute;left:665px;top:141px;width:97px;height:12px;background:#e8e6e2;"></div>
<div style="position:absolute;left:716.4px;top:141px;width:0.7px;height:12px;background:#e2e2e2;"></div>
<div class="t" style="left:666.2px;top:144px;font-size:12.0px;color:#a4a4a4;font-weight:normal;transform:scale(0.3917,0.3917) translateZ(0);transform-origin:0 0;-webkit-text-stroke:0.38px #a4a4a4;">Posición X2</div>
<div class="t" style="left:624.467px;width:400.0px;text-align:right;top:144px;font-size:12.0px;color:#a4a4a4;font-weight:normal;transform:scale(0.3368,0.3917) translateZ(0);transform-origin:0 0;-webkit-text-stroke:0.38px #a4a4a4;">0,0000</div>
<div style="position:absolute;left:665px;top:153px;width:97px;height:12px;background:#fff;"></div>
<div style="position:absolute;left:716.4px;top:153px;width:0.7px;height:12px;background:#e2e2e2;"></div>
<div class="t" style="left:666.2px;top:156px;font-size:12.0px;color:#a4a4a4;font-weight:normal;transform:scale(0.3917,0.3917) translateZ(0);transform-origin:0 0;-webkit-text-stroke:0.38px #a4a4a4;">Posición Y2</div>
<div class="t" style="left:624.467px;width:400.0px;text-align:right;top:156px;font-size:12.0px;color:#a4a4a4;font-weight:normal;transform:scale(0.3368,0.3917) translateZ(0);transform-origin:0 0;-webkit-text-stroke:0.38px #a4a4a4;">0,0000</div>
<div style="position:absolute;left:665px;top:165px;width:97px;height:12px;background:#e8e6e2;"></div>
<div style="position:absolute;left:716.4px;top:165px;width:0.7px;height:12px;background:#e2e2e2;"></div>
<div class="t" style="left:666.2px;top:168px;font-size:12.0px;color:#a4a4a4;font-weight:normal;transform:scale(0.3917,0.3917) translateZ(0);transform-origin:0 0;-webkit-text-stroke:0.38px #a4a4a4;">Ancho</div>
<div class="t" style="left:624.467px;width:400.0px;text-align:right;top:168px;font-size:12.0px;color:#a4a4a4;font-weight:normal;transform:scale(0.3368,0.3917) translateZ(0);transform-origin:0 0;-webkit-text-stroke:0.38px #a4a4a4;">0,0000</div>
<div style="position:absolute;left:665px;top:177px;width:97px;height:12px;background:#fff;"></div>
<div style="position:absolute;left:716.4px;top:177px;width:0.7px;height:12px;background:#e2e2e2;"></div>
<div class="t" style="left:666.2px;top:180px;font-size:12.0px;color:#a4a4a4;font-weight:normal;transform:scale(0.3917,0.3917) translateZ(0);transform-origin:0 0;-webkit-text-stroke:0.38px #a4a4a4;">Alto</div>
<div class="t" style="left:624.467px;width:400.0px;text-align:right;top:180px;font-size:12.0px;color:#a4a4a4;font-weight:normal;transform:scale(0.3368,0.3917) translateZ(0);transform-origin:0 0;-webkit-text-stroke:0.38px #a4a4a4;">0,0000</div>
<div style="position:absolute;left:665px;top:189px;width:97px;height:12px;background:#e8e6e2;"></div>
<div style="position:absolute;left:716.4px;top:189px;width:0.7px;height:12px;background:#e2e2e2;"></div>
<div class="t" style="left:666.2px;top:192px;font-size:12.0px;color:#a4a4a4;font-weight:normal;transform:scale(0.3917,0.3917) translateZ(0);transform-origin:0 0;-webkit-text-stroke:0.38px #a4a4a4;">Valor Z</div>
<div class="t" style="left:624.467px;width:400.0px;text-align:right;top:192px;font-size:12.0px;color:#a4a4a4;font-weight:normal;transform:scale(0.3368,0.3917) translateZ(0);transform-origin:0 0;-webkit-text-stroke:0.38px #a4a4a4;">0,0000</div>
<div style="position:absolute;left:665px;top:201px;width:97px;height:0.7px;background:#e2e2e2;"></div>
<div class="t" style="left:665.4px;top:242px;font-size:12.0px;color:#1a1a1a;font-weight:normal;transform:scale(0.3563,0.3917) translateZ(0);transform-origin:0 0;-webkit-text-stroke:0.38px #1a1a1a;">Gestor de orígenes de datos</div>
<div style="position:absolute;left:665px;top:248.4px;width:103.4px;height:174px;background:#fff;border:0.7px solid #d4d4d4;"></div>
<div style="position:absolute;left:665.5px;top:248.9px;width:102.4px;height:7.9px;background:linear-gradient(#fdfdfd,#efefef);border-bottom:0.7px solid #dcdcdc;"></div>
<div class="t" style="left:666.6px;top:251px;font-size:12.0px;color:#333;font-weight:normal;transform:scale(0.3645,0.3917) translateZ(0);transform-origin:0 0;-webkit-text-stroke:0.38px #333;">Data Sources</div>
<svg style="position:absolute;left:667.5px;top:258.4px" width="4" height="3"><path d="M0 0.2h3.6L1.8 2.6z" fill="#333"/></svg>
<svg style="position:absolute;left:675.6px;top:256.6px" width="6" height="6.5"><rect x="1.6" y="0.3" width="4" height="4.8" fill="#e4d09a" stroke="#9a8a60" stroke-width="0.4"/><ellipse cx="2" cy="4.6" rx="1.8" ry="1.3" fill="#f0b080"/></svg>
<div class="t" style="left:683.7px;top:257px;font-size:12.0px;color:#111;font-weight:bold;transform:scale(0.3821,0.3917) translateZ(0);transform-origin:0 0;-webkit-text-stroke:0.38px #111;">Orígenes de datos</div>
<svg style="position:absolute;left:677px;top:264.4px" width="3" height="4"><path d="M0.2 0v3.6L2.6 1.8z" fill="#333"/></svg>
<svg style="position:absolute;left:683px;top:262.9px" width="6" height="6.5"><rect x="1.6" y="0.3" width="4" height="4.8" fill="#e4d09a" stroke="#9a8a60" stroke-width="0.4"/><ellipse cx="2" cy="4.6" rx="1.8" ry="1.3" fill="#f0b080"/></svg>
<div class="t" style="left:691.7px;top:264px;font-size:12.0px;color:#555;font-weight:normal;transform:scale(0.3593,0.3917) translateZ(0);transform-origin:0 0;-webkit-text-stroke:0.38px #555;">FACTURAS</div>
<svg style="position:absolute;left:668.6px;top:270.9px" width="3" height="4"><path d="M0.2 0v3.6L2.6 1.8z" fill="#333"/></svg>
<svg style="position:absolute;left:675.5px;top:269.6px" width="6" height="6"><rect x="0.3" y="0.3" width="5.3" height="5.3" fill="#fafafa" stroke="#a0a0a0" stroke-width="0.45"/><path d="M0.5 1.5h5" stroke="#c8a080" stroke-width="0.6"/></svg>
<div class="t" style="left:683.7px;top:270px;font-size:12.0px;color:#111;font-weight:bold;transform:scale(0.3917,0.3917) translateZ(0);transform-origin:0 0;-webkit-text-stroke:0.38px #111;">Variables</div>
<svg style="position:absolute;left:668.6px;top:277.2px" width="3" height="4"><path d="M0.2 0v3.6L2.6 1.8z" fill="#333"/></svg>
<svg style="position:absolute;left:675.5px;top:275.9px" width="6" height="6"><rect x="0.3" y="0.3" width="5.3" height="5.3" fill="#fafafa" stroke="#a0a0a0" stroke-width="0.45"/><path d="M0.5 1.5h5" stroke="#c8a080" stroke-width="0.6"/></svg>
<div class="t" style="left:683.7px;top:277px;font-size:12.0px;color:#111;font-weight:bold;transform:scale(0.3727,0.3917) translateZ(0);transform-origin:0 0;-webkit-text-stroke:0.38px #111;">Variables de sistema</div>
<svg style="position:absolute;left:675.5px;top:282.4px" width="6" height="6"><rect x="0.3" y="0.3" width="5.3" height="5.3" fill="#fafafa" stroke="#a0a0a0" stroke-width="0.45"/><path d="M0.5 1.5h5" stroke="#c8a080" stroke-width="0.6"/></svg>
<div class="t" style="left:683.7px;top:283px;font-size:12.0px;color:#111;font-weight:bold;transform:scale(0.3917,0.3917) translateZ(0);transform-origin:0 0;-webkit-text-stroke:0.38px #111;">Parámetros</div>
<div style="position:absolute;left:1px;top:423px;width:768px;height:9.2px;background:#f0f0f0;"></div>
<div style="position:absolute;left:1px;top:423px;width:662px;height:0.7px;background:#dedede;"></div>
</body></html>
